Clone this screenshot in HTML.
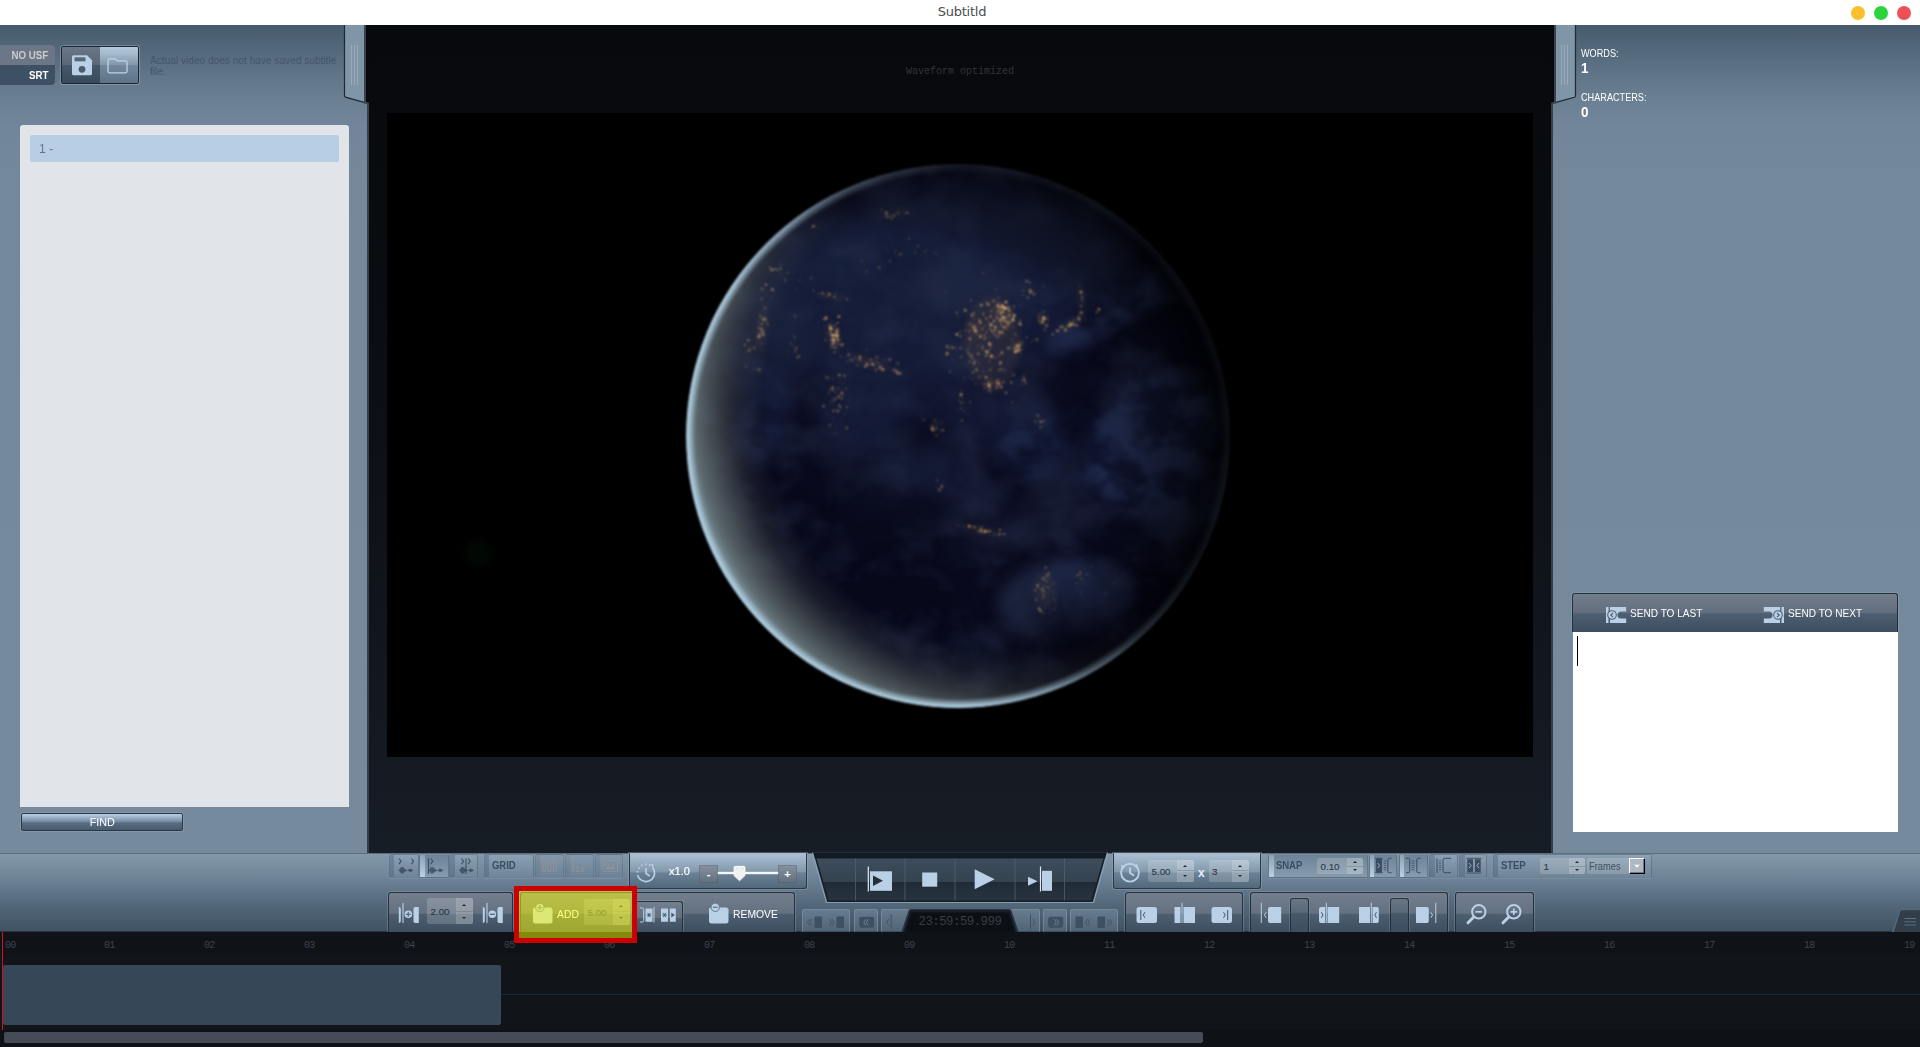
<!DOCTYPE html>
<html lang="en">
<head>
<meta charset="utf-8">
<title>Subtitld</title>
<style>
*{box-sizing:border-box;margin:0;padding:0}
html,body{width:1920px;height:1047px;overflow:hidden;background:#fff}
body{position:relative;font-family:"Liberation Sans","DejaVu Sans",sans-serif;font-size:11px;color:#fff}
.a{position:absolute}
svg{position:absolute;overflow:visible}
/* title bar */
#titlebar{left:0;top:0;width:1920px;height:25px;background:#fff}
#title{left:860px;top:3px;width:204px;text-align:center;letter-spacing:-.25px;font-family:"DejaVu Sans","Liberation Sans",sans-serif;font-size:13px;line-height:18px;color:#4d4d4d}
.wb{width:14px;height:14px;border-radius:50%;top:6px}
/* panels */
#left{left:0;top:25px;width:369px;height:828px;background:linear-gradient(#465a6c 0,#52677a 22px,#5f7487 48px,#6b8093 75px,#71869a 100px,#73889b 140px,#758a9d 100%)}
#right{left:1551px;top:25px;width:369px;height:828px;background:linear-gradient(#465a6c 0,#52677a 22px,#5f7487 48px,#6b8093 75px,#71869a 100px,#73889b 140px,#758a9d 100%)}
#center{left:369px;top:25px;width:1182px;height:828px;background:linear-gradient(#07090c 0,#0a0d11 300px,#11161c 600px,#171d25 100%)}
#video{left:387px;top:113px;width:1146px;height:644px;background:#000}
/* bottom */
#toolbar{left:0;top:853px;width:1920px;height:79px;border-top:1px solid #5c6f80;border-bottom:1px solid #2a3540;background:linear-gradient(#8398a9 0,#6f8496 30%,#566a7d 62%,#3f5365 100%)}
#timeline{left:0;top:932px;width:1920px;height:115px;background:#111418}
.tl{top:939.5px;font-family:"Liberation Mono","DejaVu Sans Mono",monospace;font-size:10px;letter-spacing:-.8px;line-height:12px;color:#3a4350}

/* left panel content */
.tab{left:0;width:55px;height:20px;text-align:right;padding-right:7px;font-weight:bold;font-size:11.2px;line-height:20px}
.tab span{display:inline-block;transform:scaleX(.87);transform-origin:right center}
.u{display:inline-block;transform:scaleX(.87);transform-origin:left center;white-space:nowrap}
.uc{display:inline-block;transform:scaleX(.87);transform-origin:center center;white-space:nowrap}
#tab1{top:45px;background:#6c7687;color:#cdcdcd;border-top-right-radius:4px}
#tab2{top:65px;background:#3d5064;color:#fff;border-bottom-right-radius:4px}
#fbtn{left:61px;top:46px;width:78px;height:38px;border:1px solid #1c2631;border-radius:2px;box-shadow:0 0 0 1px rgba(160,180,200,.45);overflow:hidden}
#fbtn .h1{left:0;top:0;width:38px;height:36px;background:linear-gradient(#6b7787 0,#5a6777 49%,#45586a 51%,#384a5c 100%)}
#fbtn .h2{left:38px;top:0;width:38px;height:36px;background:linear-gradient(#b4c9dd 0,#a5bacd 18%,#8398ab 49%,#71879b 51%,#5d7388 100%)}
#msg{left:150px;top:55px;width:200px;font-size:10.15px;line-height:11px;color:#42566a}
#list{left:20px;top:125px;width:329px;height:682px;background:#e1e5ea;border-radius:3px 3px 0 0}
#row{left:30px;top:135px;width:309px;height:27px;background:#b8cee4;border-radius:2px;color:#657484;font-size:13.5px;line-height:27px;padding-left:9px}
#find{left:21px;top:813px;width:162px;height:18px;border:1px solid #2a3744;border-radius:2px;background:linear-gradient(#b9cddf 0,#9eb3c7 20%,#7188a0 50%,#586e84 55%,#475b6e 100%);text-align:center;font-size:11.4px;line-height:16px;color:#fff;box-shadow:0 0 0 1px rgba(150,170,190,.4)}
.stat{left:1581px;font-size:10.5px;line-height:11px;color:#fff}
.statv{left:1581px;font-size:14.5px;font-weight:bold;line-height:16px;color:#fff;transform:scaleX(.93);transform-origin:left}

#sendbar{left:1572px;top:593px;width:326px;height:39px;border:1px solid #26303b;border-bottom:none;border-radius:3px 3px 0 0;background:linear-gradient(#737e8d 0,#626e7d 49%,#4d5f71 52%,#3c4e60 100%);box-shadow:0 0 0 1px rgba(150,170,190,.35)}
#textbox{left:1573px;top:632px;width:325px;height:200px;background:#fff}
.sendt{top:606px;font-size:11.4px;line-height:14px;color:#fff}
/*TBCSS*//* toolbar */
.tb{top:853.5px;height:24px;background:linear-gradient(#8ba0b2,#6f8598);border:1px solid rgba(70,90,110,.45);border-top-color:rgba(70,90,110,.15);border-radius:2px;box-shadow:0 1px 0 rgba(160,180,200,.25)}
.tb i{position:absolute;left:0;top:0;width:4.500px;height:22px;background:linear-gradient(#71869a,#5f7589)}
.tb.on{background:linear-gradient(#6d8396,#869bae)}
.tb.on i{background:linear-gradient(#8da2b5,#bbcfe2)}
.tb.dis{background:linear-gradient(#8398aa,#6c8295);border-color:rgba(70,90,110,.3)}
.tb.dis svg{opacity:.7}
.tb.dis i{background:linear-gradient(#7b90a3,#677d90)}
.lbl{position:absolute;top:3.500px;font-size:11px;letter-spacing:-.1px;font-weight:bold;line-height:14px;color:#3b4d60}
.pnl{border:1px solid #27313c;border-bottom:none;border-radius:3px 3px 0 0;background:linear-gradient(#747f8e 0,#63707f 52%,#4c5e70 55%,#3c4e60 100%);box-shadow:0 0 0 1px rgba(150,170,190,.35)}
.pnl.in{background:linear-gradient(#6a7685 0,#5b6877 40%,#46586a 44%,#3b4d5f 100%);box-shadow:0 0 0 1px rgba(150,170,190,.25)}
.pnl2{border:1px solid #2b3845;border-top-color:#a5b9cb;border-radius:0 0 3px 3px;background:linear-gradient(#aabfd2 0,#8298ab 52%,#6b8195 56%,#52687b 100%);box-shadow:0 0 0 1px rgba(150,170,190,.4)}
.spin{border-radius:2px;background:rgba(255,255,255,.17);overflow:hidden}
.spin b{position:absolute;right:0;top:0;height:100%;background:rgba(255,255,255,.16);box-shadow:inset 0 0 0 .5px rgba(255,255,255,.08)}
.spin b:after{content:"";position:absolute;left:0;right:0;top:50%;height:1px;margin-top:-.5px;background:rgba(90,100,115,.35)}
.spin u{position:absolute;left:4px;top:0;text-decoration:none;font-size:11.500px;color:#26384a;line-height:100%;-webkit-text-stroke:.15px #26384a}
.spin s{position:absolute;width:0;height:0;margin-left:.5px;border:2px solid transparent;border-top:none;border-bottom:2.500px solid #1e2a36}
.spin s.dn{border-bottom:none;border-top:2.500px solid #1e2a36}
.spin.md u{top:6.500px;font-size:9.800px;line-height:14px;left:3.500px}
.spin.lt u{top:4.500px;font-size:9.800px;line-height:14px;left:3.500px;color:#2d4053}
.spin.sm u{top:1.500px;font-size:9.800px;line-height:14px}
.spin.dim u{color:#3a4c5f}
.db{top:909px;height:23px;background:linear-gradient(rgba(150,172,192,.32),rgba(150,172,192,.2));border:1px solid rgba(150,170,190,.4);border-bottom:none;border-radius:2px 2px 0 0}
#redbox{left:514px;top:886px;width:123px;height:57px;border:5px solid #cc0000;background:rgba(255,255,0,.5)}
/* timeline */
#tlhead{left:0;top:932px;width:1920px;height:22px;background:#0f1318}
#tlblock{left:3px;top:965px;width:498px;height:60px;background:#364757;border-radius:2px}
#tlline{left:501px;top:994px;width:1419px;height:1px;background:#16293a}
#tlscroll{left:4px;top:1032px;width:1199px;height:11px;background:#454c57;border-radius:2px}
#tlscrollbg{left:0;top:1030px;width:1920px;height:17px;background:#0e1115}
#play{left:2px;top:932px;width:1px;height:98px;background:#d8101a}
/*/TBCSS*/
</style>
</head>
<body>
<div id="titlebar" class="a"></div>
<div id="title" class="a">Subtitld</div>
<div class="a wb" style="left:1851px;background:#fbc02d"></div>
<div class="a wb" style="left:1874px;background:#2cd43c"></div>
<div class="a wb" style="left:1897px;background:#ef4f57"></div>

<div id="center" class="a"></div>
<div id="left" class="a"></div>
<div id="right" class="a"></div>
<div id="wf" class="a" style="left:860px;top:65.5px;width:200px;text-align:center;font-family:'Liberation Mono','DejaVu Sans Mono',monospace;font-size:10px;line-height:12px;color:#30353b">Waveform optimized</div>
<div id="video" class="a"></div>
<!--EARTH--><svg id="earth" width="1146" height="644" viewBox="387 113 1146 644" style="left:387px;top:113px">
<defs>
<clipPath id="ec"><circle cx="958" cy="436" r="272"/></clipPath>
<filter id="b1" color-interpolation-filters="sRGB" filterUnits="userSpaceOnUse" x="387" y="113" width="1146" height="644"><feGaussianBlur stdDeviation="1.1"/></filter>
<filter id="b2" color-interpolation-filters="sRGB" filterUnits="userSpaceOnUse" x="387" y="113" width="1146" height="644"><feGaussianBlur stdDeviation="14"/></filter>
<filter id="b3" color-interpolation-filters="sRGB" filterUnits="userSpaceOnUse" x="387" y="113" width="1146" height="644"><feGaussianBlur stdDeviation="7"/></filter>
<filter id="b4" color-interpolation-filters="sRGB" filterUnits="userSpaceOnUse" x="387" y="113" width="1146" height="644"><feGaussianBlur stdDeviation="0.7"/></filter>
<filter id="b5" color-interpolation-filters="sRGB" filterUnits="userSpaceOnUse" x="387" y="113" width="1146" height="644"><feGaussianBlur stdDeviation="3"/></filter>
<filter id="cl" color-interpolation-filters="sRGB" filterUnits="userSpaceOnUse" x="680" y="160" width="560" height="556"><feTurbulence type="fractalNoise" baseFrequency="0.012 0.016" numOctaves="5" seed="11" result="n"/><feColorMatrix in="n" type="matrix" values="0 0 0 0 0.14  0 0 0 0 0.18  0 0 0 0 0.29  3 0 0 0 -1.35"/><feGaussianBlur stdDeviation="1.2"/></filter>
<filter id="cl2" color-interpolation-filters="sRGB" filterUnits="userSpaceOnUse" x="680" y="160" width="560" height="556"><feTurbulence type="fractalNoise" baseFrequency="0.02 0.026" numOctaves="4" seed="5" result="n"/><feColorMatrix in="n" type="matrix" values="0 0 0 0 0.15  0 0 0 0 0.18  0 0 0 0 0.29  0 3 0 0 -1.4"/><feGaussianBlur stdDeviation="1"/></filter>
<filter id="cl3" color-interpolation-filters="sRGB" filterUnits="userSpaceOnUse" x="680" y="160" width="560" height="556"><feTurbulence type="fractalNoise" baseFrequency="0.028 0.034" numOctaves="4" seed="8" result="n"/><feColorMatrix in="n" type="matrix" values="0 0 0 0 0.12  0 0 0 0 0.16  0 0 0 0 0.29  0 0 4 0 -1.55"/><feGaussianBlur stdDeviation="1.3"/></filter>
<radialGradient id="eg" gradientUnits="userSpaceOnUse" cx="1014" cy="404" r="337">
<stop offset="0" stop-color="#62696b" stop-opacity="0"/>
<stop offset=".74" stop-color="#62696b" stop-opacity="0"/>
<stop offset=".82" stop-color="#5f6766" stop-opacity=".22"/>
<stop offset=".89" stop-color="#697472" stop-opacity=".55"/>
<stop offset=".95" stop-color="#758686" stop-opacity=".78"/>
<stop offset=".985" stop-color="#8ba2ae" stop-opacity=".92"/>
<stop offset="1" stop-color="#a9c8d9" stop-opacity="1"/>
</radialGradient>
<radialGradient id="er" gradientUnits="userSpaceOnUse" cx="958" cy="436" r="272">
<stop offset="0" stop-color="#9dbccc" stop-opacity="0"/>
<stop offset=".965" stop-color="#9dbccc" stop-opacity="0"/>
<stop offset=".99" stop-color="#aecde0" stop-opacity=".9"/>
<stop offset="1" stop-color="#aecde0" stop-opacity="1"/>
</radialGradient>
<linearGradient id="em" gradientUnits="userSpaceOnUse" x1="690" y1="590" x2="1226" y2="282">
<stop offset="0" stop-color="#fff"/><stop offset=".30" stop-color="#fff" stop-opacity="1"/><stop offset=".42" stop-color="#fff" stop-opacity=".75"/><stop offset=".5" stop-color="#fff" stop-opacity=".45"/><stop offset=".6" stop-color="#fff" stop-opacity=".18"/><stop offset=".72" stop-color="#fff" stop-opacity=".04"/><stop offset="1" stop-color="#fff" stop-opacity="0"/>
</linearGradient>
<radialGradient id="eld" gradientUnits="userSpaceOnUse" cx="900" cy="450" r="335">
<stop offset="0" stop-color="#000" stop-opacity="0"/><stop offset=".62" stop-color="#000" stop-opacity="0"/><stop offset=".85" stop-color="#000" stop-opacity=".45"/><stop offset="1" stop-color="#000" stop-opacity=".85"/>
</radialGradient>
<mask id="emk" maskUnits="userSpaceOnUse" x="387" y="113" width="1146" height="644"><rect x="387" y="113" width="1146" height="644" fill="url(#em)"/></mask>
<radialGradient id="ebase" gradientUnits="userSpaceOnUse" cx="960" cy="400" r="300">
<stop offset="0" stop-color="#0b0d22"/><stop offset=".7" stop-color="#090a1d"/><stop offset="1" stop-color="#060718"/>
</radialGradient>
</defs>
<circle cx="478" cy="553" r="13" fill="#010803" filter="url(#b5)"/><!--flare-->
<g filter="url(#b1)"><g clip-path="url(#ec)">
<circle cx="958" cy="436" r="272" fill="url(#ebase)"/>
<g filter="url(#b2)">
<ellipse cx="930" cy="285" rx="190" ry="85" fill="#171e3a" opacity="0.9" transform="rotate(-8 930 285)"/>
<ellipse cx="865" cy="395" rx="48" ry="62" fill="#161d39" opacity="0.9" transform="rotate(10 865 395)"/>
<ellipse cx="990" cy="375" rx="75" ry="70" fill="#151c37" opacity="0.8" transform="rotate(0 990 375)"/>
<ellipse cx="775" cy="345" rx="38" ry="70" fill="#19203b" opacity="0.8" transform="rotate(10 775 345)"/>
<ellipse cx="1000" cy="215" rx="120" ry="35" fill="#151b34" opacity="0.8" transform="rotate(8 1000 215)"/>
</g>
<g filter="url(#b3)">
<ellipse cx="1065" cy="600" rx="68" ry="38" fill="#1d253f" opacity="0.95" transform="rotate(-5 1065 600)"/>
<ellipse cx="900" cy="480" rx="60" ry="25" fill="#181f3a" opacity="0.7" transform="rotate(-25 900 480)"/>
<ellipse cx="960" cy="490" rx="50" ry="22" fill="#171e39" opacity="0.6" transform="rotate(15 960 490)"/>
<ellipse cx="870" cy="640" rx="35" ry="25" fill="#151b34" opacity="0.6" transform="rotate(30 870 640)"/>
<ellipse cx="1000" cy="300" rx="25" ry="30" fill="#19213d" opacity="0.5" transform="rotate(0 1000 300)"/>
<ellipse cx="830" cy="250" rx="60" ry="35" fill="#19213d" opacity="0.6" transform="rotate(-20 830 250)"/>
</g>
<rect x="680" y="160" width="560" height="556" filter="url(#cl)" opacity=".5"/>
<g filter="url(#b2)">
<ellipse cx="820" cy="600" rx="150" ry="110" fill="#07081a" opacity="0.85" transform="rotate(-30 820 600)"/>
<ellipse cx="1100" cy="640" rx="90" ry="40" fill="#08091a" opacity="0.7" transform="rotate(0 1100 640)"/>
<ellipse cx="1110" cy="365" rx="90" ry="45" fill="#08091b" opacity="0.75" transform="rotate(-20 1110 365)"/>
<ellipse cx="1190" cy="290" rx="60" ry="80" fill="#06071a" opacity="0.7" transform="rotate(-30 1190 290)"/>
</g>
<mask id="cm" maskUnits="userSpaceOnUse" x="680" y="160" width="560" height="556"><g filter="url(#b3)">
<ellipse cx="1165" cy="420" rx="56" ry="51" fill="#fff" opacity="1" transform="rotate(0 1165 420)"/>
<ellipse cx="1120" cy="455" rx="41" ry="51" fill="#fff" opacity="0.9" transform="rotate(20 1120 455)"/>
<ellipse cx="1150" cy="475" rx="56" ry="46" fill="#fff" opacity="0.7999999999999999" transform="rotate(0 1150 475)"/>
<ellipse cx="1125" cy="303" rx="86" ry="18" fill="#fff" opacity="1" transform="rotate(-28 1125 303)"/>
<ellipse cx="1075" cy="335" rx="36" ry="16" fill="#fff" opacity="0.7999999999999999" transform="rotate(-28 1075 335)"/>
<ellipse cx="1030" cy="440" rx="34" ry="36" fill="#fff" opacity="0.7999999999999999" transform="rotate(0 1030 440)"/>
<ellipse cx="1085" cy="590" rx="46" ry="36" fill="#fff" opacity="0.6" transform="rotate(0 1085 590)"/>
<ellipse cx="760" cy="420" rx="28" ry="46" fill="#fff" opacity="0.65" transform="rotate(15 760 420)"/>
</g></mask>
<g mask="url(#cm)"><rect x="680" y="160" width="560" height="556" fill="#141b38" opacity=".55"/><rect x="680" y="160" width="560" height="556" filter="url(#cl3)" opacity=".95"/></g>
<rect x="680" y="160" width="560" height="556" filter="url(#cl2)" opacity=".4"/>
<g filter="url(#b5)" opacity=".55">
<ellipse cx="762" cy="328" rx="4" ry="25" fill="#8a6a4a" opacity="0.28" transform="rotate(8 762 328)"/>
<ellipse cx="893" cy="214" rx="14" ry="4" fill="#8a6a4a" opacity="0.24" transform="rotate(-15 893 214)"/>
<ellipse cx="830" cy="296" rx="14" ry="3" fill="#8a6a4a" opacity="0.24" transform="rotate(5 830 296)"/>
<ellipse cx="833" cy="336" rx="6" ry="15" fill="#8a6a4a" opacity="0.35" transform="rotate(-15 833 336)"/>
<ellipse cx="868" cy="362" rx="21" ry="5" fill="#8a6a4a" opacity="0.28" transform="rotate(15 868 362)"/>
<ellipse cx="992" cy="342" rx="28" ry="46" fill="#8a6a4a" opacity="0.26" transform="rotate(0 992 342)"/>
<ellipse cx="1003" cy="318" rx="10" ry="12" fill="#8a6a4a" opacity="0.35" transform="rotate(0 1003 318)"/>
<ellipse cx="1000" cy="307" rx="5" ry="4" fill="#8a6a4a" opacity="0.35" transform="rotate(0 1000 307)"/>
<ellipse cx="1017" cy="346" rx="5" ry="7" fill="#8a6a4a" opacity="0.35" transform="rotate(0 1017 346)"/>
<ellipse cx="993" cy="386" rx="9" ry="5" fill="#8a6a4a" opacity="0.35" transform="rotate(0 993 386)"/>
<ellipse cx="975" cy="330" rx="9" ry="9" fill="#8a6a4a" opacity="0.32" transform="rotate(0 975 330)"/>
<ellipse cx="1044" cy="320" rx="5" ry="6" fill="#8a6a4a" opacity="0.35" transform="rotate(0 1044 320)"/>
<ellipse cx="1071" cy="324" rx="16" ry="3" fill="#8a6a4a" opacity="0.35" transform="rotate(-30 1071 324)"/>
<ellipse cx="1082" cy="300" rx="3" ry="12" fill="#8a6a4a" opacity="0.28" transform="rotate(0 1082 300)"/>
<ellipse cx="980" cy="530" rx="19" ry="3" fill="#8a6a4a" opacity="0.35" transform="rotate(10 980 530)"/>
<ellipse cx="937" cy="427" rx="6" ry="7" fill="#8a6a4a" opacity="0.24" transform="rotate(0 937 427)"/>
<ellipse cx="1045" cy="590" rx="10" ry="18" fill="#8a6a4a" opacity="0.24" transform="rotate(0 1045 590)"/>
</g>
<g filter="url(#b4)"><circle cx="760.2" cy="335.7" r="0.5" fill="#e8b470" opacity="0.31"/><circle cx="760.8" cy="331.9" r="0.8" fill="#c9985a" opacity="0.30"/><circle cx="759.5" cy="333.3" r="1.2" fill="#e8b470" opacity="0.31"/><circle cx="766.6" cy="321.5" r="0.5" fill="#c9985a" opacity="0.56"/><circle cx="763.4" cy="331.6" r="0.7" fill="#dba868" opacity="0.42"/><circle cx="759.3" cy="322.5" r="0.7" fill="#dba868" opacity="0.33"/><circle cx="757.7" cy="341.5" r="0.6" fill="#dba868" opacity="0.55"/><circle cx="758.6" cy="328" r="1" fill="#c9985a" opacity="0.50"/><circle cx="759.4" cy="336.6" r="0.7" fill="#dba868" opacity="0.62"/><circle cx="763.1" cy="334.6" r="1.5" fill="#c9985a" opacity="0.70"/><circle cx="754.4" cy="369.2" r="0.6" fill="#dba868" opacity="0.53"/><circle cx="763.3" cy="319.3" r="1.5" fill="#e8b470" opacity="0.48"/><circle cx="765.1" cy="308.2" r="1" fill="#f3c987" opacity="0.44"/><circle cx="760.6" cy="316.4" r="1.5" fill="#e8b470" opacity="0.31"/><circle cx="765.7" cy="322.5" r="0.6" fill="#f3c987" opacity="0.31"/><circle cx="762.2" cy="288.9" r="1.5" fill="#c9985a" opacity="0.42"/><circle cx="765.2" cy="319.1" r="1.5" fill="#e8b470" opacity="0.45"/><circle cx="760" cy="328.2" r="0.9" fill="#dba868" opacity="0.34"/><circle cx="754.3" cy="347.7" r="1.5" fill="#c9985a" opacity="0.32"/><circle cx="759.2" cy="334.9" r="0.7" fill="#f3c987" opacity="0.67"/><circle cx="765.9" cy="284.6" r="1.2" fill="#dba868" opacity="0.74"/><circle cx="762.7" cy="332.5" r="0.8" fill="#dba868" opacity="0.29"/><circle cx="761.8" cy="329.4" r="1.2" fill="#f3c987" opacity="0.54"/><circle cx="766.9" cy="321.8" r="0.5" fill="#c9985a" opacity="0.50"/><circle cx="758.5" cy="336.8" r="1.5" fill="#e8b470" opacity="0.58"/><circle cx="759.1" cy="369.5" r="1.5" fill="#f3c987" opacity="0.36"/><circle cx="761.6" cy="323.7" r="0.7" fill="#f3c987" opacity="0.54"/><circle cx="761.8" cy="324.1" r="0.8" fill="#dba868" opacity="0.57"/><circle cx="761.5" cy="298.9" r="1" fill="#e8b470" opacity="0.51"/><circle cx="772.5" cy="289.6" r="1.5" fill="#f3c987" opacity="0.51"/><circle cx="762.6" cy="331.8" r="1" fill="#c9985a" opacity="0.64"/><circle cx="763.9" cy="320.1" r="0.5" fill="#f3c987" opacity="0.38"/><circle cx="761.9" cy="343.5" r="0.5" fill="#f3c987" opacity="0.64"/><circle cx="768" cy="324.7" r="0.9" fill="#dba868" opacity="0.53"/><circle cx="759.6" cy="336.4" r="1" fill="#dba868" opacity="0.59"/><circle cx="753.7" cy="331.5" r="0.8" fill="#c9985a" opacity="0.23"/><circle cx="748.3" cy="352" r="0.5" fill="#c9985a" opacity="0.41"/><circle cx="745.9" cy="366.6" r="1" fill="#f3c987" opacity="0.31"/><circle cx="751.5" cy="347.5" r="0.8" fill="#c9985a" opacity="0.21"/><circle cx="748.3" cy="357" r="0.5" fill="#f3c987" opacity="0.32"/><circle cx="750" cy="345.7" r="0.6" fill="#dba868" opacity="0.45"/><circle cx="747.5" cy="350.7" r="1" fill="#c9985a" opacity="0.20"/><circle cx="744.8" cy="353.5" r="0.6" fill="#dba868" opacity="0.39"/><circle cx="749.5" cy="350" r="1.5" fill="#dba868" opacity="0.42"/><circle cx="748.4" cy="340.2" r="1.5" fill="#f3c987" opacity="0.37"/><circle cx="748.5" cy="361.6" r="0.5" fill="#e8b470" opacity="0.18"/><circle cx="744.8" cy="344.9" r="1.2" fill="#dba868" opacity="0.47"/><circle cx="777.3" cy="269.4" r="0.9" fill="#dba868" opacity="0.29"/><circle cx="775.5" cy="269.1" r="1.2" fill="#e8b470" opacity="0.51"/><circle cx="780.3" cy="268.7" r="1.5" fill="#c9985a" opacity="0.45"/><circle cx="779.9" cy="264.2" r="0.7" fill="#e8b470" opacity="0.40"/><circle cx="782.1" cy="265.4" r="0.5" fill="#dba868" opacity="0.49"/><circle cx="780.4" cy="273.9" r="0.6" fill="#f3c987" opacity="0.41"/><circle cx="771.6" cy="269.7" r="1.5" fill="#e8b470" opacity="0.49"/><circle cx="777.3" cy="270.7" r="0.8" fill="#e8b470" opacity="0.31"/><circle cx="768" cy="274.7" r="0.6" fill="#dba868" opacity="0.37"/><circle cx="772.4" cy="269.7" r="1.5" fill="#dba868" opacity="0.39"/><circle cx="769.8" cy="267.4" r="0.9" fill="#dba868" opacity="0.54"/><circle cx="793.3" cy="345.5" r="0.6" fill="#f3c987" opacity="0.35"/><circle cx="794.9" cy="349.8" r="0.6" fill="#f3c987" opacity="0.29"/><circle cx="794" cy="336.5" r="0.7" fill="#f3c987" opacity="0.55"/><circle cx="797.7" cy="356.9" r="1.5" fill="#e8b470" opacity="0.29"/><circle cx="787.9" cy="351.8" r="0.8" fill="#c9985a" opacity="0.27"/><circle cx="796.5" cy="347.8" r="1.2" fill="#f3c987" opacity="0.28"/><circle cx="795.5" cy="350.9" r="1" fill="#c9985a" opacity="0.41"/><circle cx="790.7" cy="342.8" r="0.9" fill="#e8b470" opacity="0.39"/><circle cx="799.5" cy="356" r="0.8" fill="#e8b470" opacity="0.56"/><circle cx="795" cy="350.2" r="0.7" fill="#dba868" opacity="0.31"/><circle cx="795.6" cy="338.3" r="0.9" fill="#c9985a" opacity="0.36"/><circle cx="791.4" cy="345.7" r="0.5" fill="#dba868" opacity="0.50"/><circle cx="814.2" cy="226.3" r="0.5" fill="#f3c987" opacity="0.51"/><circle cx="818.7" cy="227.6" r="0.6" fill="#e8b470" opacity="0.36"/><circle cx="813.1" cy="226.4" r="1.2" fill="#f3c987" opacity="0.63"/><circle cx="814.5" cy="225.7" r="0.8" fill="#dba868" opacity="0.64"/><circle cx="893" cy="215.8" r="0.9" fill="#dba868" opacity="0.51"/><circle cx="891.3" cy="217.7" r="0.7" fill="#e8b470" opacity="0.36"/><circle cx="895.3" cy="213.4" r="0.5" fill="#dba868" opacity="0.55"/><circle cx="886.6" cy="215.5" r="1.5" fill="#c9985a" opacity="0.29"/><circle cx="886.3" cy="212.8" r="1.2" fill="#f3c987" opacity="0.65"/><circle cx="881.9" cy="209.5" r="1" fill="#dba868" opacity="0.33"/><circle cx="886.9" cy="217.1" r="0.5" fill="#e8b470" opacity="0.60"/><circle cx="906.1" cy="212.5" r="0.9" fill="#e8b470" opacity="0.43"/><circle cx="907.8" cy="212.8" r="0.9" fill="#f3c987" opacity="0.50"/><circle cx="898.4" cy="213.1" r="0.9" fill="#f3c987" opacity="0.43"/><circle cx="888.5" cy="217.1" r="1" fill="#f3c987" opacity="0.35"/><circle cx="894.5" cy="215.4" r="1" fill="#c9985a" opacity="0.41"/><circle cx="891.8" cy="218.4" r="0.8" fill="#e8b470" opacity="0.46"/><circle cx="906.9" cy="213.1" r="0.7" fill="#e8b470" opacity="0.41"/><circle cx="824.1" cy="296.3" r="0.8" fill="#dba868" opacity="0.28"/><circle cx="822.6" cy="293.2" r="1.2" fill="#c9985a" opacity="0.57"/><circle cx="838.1" cy="298.9" r="0.7" fill="#c9985a" opacity="0.26"/><circle cx="828.6" cy="292.9" r="0.7" fill="#e8b470" opacity="0.63"/><circle cx="835.5" cy="294.5" r="0.8" fill="#e8b470" opacity="0.28"/><circle cx="835.5" cy="297.6" r="0.6" fill="#c9985a" opacity="0.40"/><circle cx="818.6" cy="294.2" r="0.8" fill="#e8b470" opacity="0.45"/><circle cx="826.8" cy="295.9" r="0.6" fill="#e8b470" opacity="0.52"/><circle cx="829.9" cy="294.1" r="0.6" fill="#dba868" opacity="0.60"/><circle cx="829.3" cy="294.8" r="1.5" fill="#c9985a" opacity="0.45"/><circle cx="846.9" cy="299.2" r="0.9" fill="#dba868" opacity="0.57"/><circle cx="834.3" cy="296.8" r="0.9" fill="#f3c987" opacity="0.52"/><circle cx="830.7" cy="333.1" r="1.5" fill="#f3c987" opacity="0.39"/><circle cx="834.5" cy="334.8" r="0.8" fill="#f3c987" opacity="0.76"/><circle cx="830.3" cy="329" r="1.5" fill="#e8b470" opacity="0.63"/><circle cx="837.6" cy="334.3" r="0.9" fill="#c9985a" opacity="0.94"/><circle cx="837.4" cy="336" r="1.5" fill="#c9985a" opacity="0.95"/><circle cx="840.9" cy="356.5" r="0.8" fill="#e8b470" opacity="0.39"/><circle cx="838.1" cy="343.8" r="1" fill="#f3c987" opacity="0.43"/><circle cx="834.9" cy="325.6" r="0.8" fill="#c9985a" opacity="0.65"/><circle cx="832.2" cy="339.7" r="1.5" fill="#c9985a" opacity="0.76"/><circle cx="833.6" cy="340.9" r="1" fill="#e8b470" opacity="0.58"/><circle cx="833" cy="335.5" r="1" fill="#e8b470" opacity="0.85"/><circle cx="834.7" cy="333.2" r="0.5" fill="#f3c987" opacity="0.89"/><circle cx="833.9" cy="339.3" r="1.2" fill="#e8b470" opacity="0.95"/><circle cx="832.4" cy="344" r="0.9" fill="#f3c987" opacity="0.86"/><circle cx="841.4" cy="344.7" r="0.9" fill="#dba868" opacity="0.73"/><circle cx="834.9" cy="343.1" r="1" fill="#f3c987" opacity="0.46"/><circle cx="831.4" cy="326.5" r="0.5" fill="#c9985a" opacity="0.84"/><circle cx="837.6" cy="322.9" r="0.8" fill="#e8b470" opacity="0.78"/><circle cx="835.5" cy="331.3" r="0.7" fill="#f3c987" opacity="0.74"/><circle cx="825.3" cy="340" r="0.7" fill="#c9985a" opacity="0.45"/><circle cx="833" cy="342.8" r="0.9" fill="#dba868" opacity="0.59"/><circle cx="834.4" cy="347.3" r="1.2" fill="#dba868" opacity="0.42"/><circle cx="838.2" cy="339.8" r="1.5" fill="#c9985a" opacity="0.68"/><circle cx="838.9" cy="316.4" r="1.5" fill="#dba868" opacity="0.61"/><circle cx="834.6" cy="341.6" r="0.6" fill="#f3c987" opacity="0.54"/><circle cx="835.9" cy="347.8" r="0.5" fill="#c9985a" opacity="0.80"/><circle cx="831.1" cy="347.3" r="0.8" fill="#f3c987" opacity="0.58"/><circle cx="830.2" cy="325.4" r="1" fill="#dba868" opacity="0.43"/><circle cx="842.5" cy="344.8" r="1.2" fill="#c9985a" opacity="0.59"/><circle cx="830.9" cy="340" r="0.5" fill="#c9985a" opacity="0.43"/><circle cx="826" cy="317.9" r="1.5" fill="#c9985a" opacity="0.93"/><circle cx="836.7" cy="335" r="1.5" fill="#dba868" opacity="0.93"/><circle cx="831.9" cy="329.6" r="0.7" fill="#e8b470" opacity="0.66"/><circle cx="837.2" cy="329.3" r="1.5" fill="#e8b470" opacity="0.40"/><circle cx="834.9" cy="335.5" r="0.5" fill="#f3c987" opacity="0.74"/><circle cx="837.3" cy="331.7" r="1.2" fill="#e8b470" opacity="0.77"/><circle cx="836.7" cy="339.8" r="0.8" fill="#dba868" opacity="0.58"/><circle cx="832.9" cy="335.6" r="0.9" fill="#f3c987" opacity="0.95"/><circle cx="837.3" cy="331.3" r="0.8" fill="#dba868" opacity="0.64"/><circle cx="832" cy="335.6" r="1.2" fill="#f3c987" opacity="0.77"/><circle cx="835.8" cy="337.4" r="1.2" fill="#dba868" opacity="0.40"/><circle cx="824" cy="319.3" r="0.8" fill="#f3c987" opacity="0.65"/><circle cx="830.1" cy="327.8" r="1.2" fill="#f3c987" opacity="0.47"/><circle cx="829.8" cy="325.4" r="0.8" fill="#dba868" opacity="0.65"/><circle cx="834.5" cy="352.2" r="0.8" fill="#f3c987" opacity="0.63"/><circle cx="831.2" cy="328.4" r="1.5" fill="#dba868" opacity="0.72"/><circle cx="825.4" cy="340" r="0.5" fill="#dba868" opacity="0.92"/><circle cx="833.7" cy="334.3" r="0.5" fill="#dba868" opacity="0.93"/><circle cx="850" cy="359.9" r="0.7" fill="#f3c987" opacity="0.47"/><circle cx="866.2" cy="349.7" r="0.7" fill="#dba868" opacity="0.44"/><circle cx="859.9" cy="356.4" r="1.5" fill="#c9985a" opacity="0.30"/><circle cx="889.7" cy="359.4" r="1.5" fill="#e8b470" opacity="0.36"/><circle cx="872.4" cy="363.9" r="1.2" fill="#e8b470" opacity="0.74"/><circle cx="848.6" cy="354.6" r="1.2" fill="#f3c987" opacity="0.45"/><circle cx="874.8" cy="360.5" r="0.5" fill="#dba868" opacity="0.62"/><circle cx="846.7" cy="361.8" r="0.8" fill="#c9985a" opacity="0.44"/><circle cx="880.7" cy="366.1" r="1.2" fill="#e8b470" opacity="0.30"/><circle cx="845.2" cy="357.3" r="0.5" fill="#e8b470" opacity="0.40"/><circle cx="877.8" cy="362.8" r="0.9" fill="#e8b470" opacity="0.44"/><circle cx="865.1" cy="366.6" r="1" fill="#f3c987" opacity="0.72"/><circle cx="889.4" cy="367.9" r="0.6" fill="#dba868" opacity="0.29"/><circle cx="883" cy="369.4" r="1.5" fill="#c9985a" opacity="0.74"/><circle cx="876.8" cy="357" r="1.5" fill="#c9985a" opacity="0.34"/><circle cx="876" cy="369.8" r="0.9" fill="#dba868" opacity="0.67"/><circle cx="859.6" cy="357.8" r="1" fill="#e8b470" opacity="0.50"/><circle cx="855.4" cy="358.4" r="0.7" fill="#e8b470" opacity="0.40"/><circle cx="860.2" cy="356.7" r="1" fill="#c9985a" opacity="0.36"/><circle cx="897.9" cy="363.2" r="0.9" fill="#dba868" opacity="0.58"/><circle cx="879.7" cy="367.4" r="1.5" fill="#dba868" opacity="0.36"/><circle cx="852" cy="360.1" r="0.8" fill="#e8b470" opacity="0.64"/><circle cx="870.7" cy="359.9" r="0.9" fill="#f3c987" opacity="0.55"/><circle cx="867.1" cy="364.4" r="1.5" fill="#dba868" opacity="0.40"/><circle cx="868.3" cy="364.8" r="0.8" fill="#c9985a" opacity="0.44"/><circle cx="867.3" cy="364.4" r="0.8" fill="#e8b470" opacity="0.59"/><circle cx="847.8" cy="348" r="0.6" fill="#dba868" opacity="0.28"/><circle cx="884.8" cy="360.1" r="0.5" fill="#dba868" opacity="0.70"/><circle cx="873.7" cy="365" r="0.8" fill="#f3c987" opacity="0.73"/><circle cx="860.1" cy="359.7" r="0.9" fill="#e8b470" opacity="0.65"/><circle cx="880.8" cy="368.3" r="1" fill="#f3c987" opacity="0.38"/><circle cx="865.7" cy="362.3" r="0.9" fill="#dba868" opacity="0.30"/><circle cx="844.4" cy="375.5" r="1.2" fill="#dba868" opacity="0.45"/><circle cx="835.4" cy="392.6" r="0.5" fill="#c9985a" opacity="0.50"/><circle cx="841.8" cy="398.2" r="1.2" fill="#dba868" opacity="0.45"/><circle cx="835.5" cy="391.9" r="0.7" fill="#f3c987" opacity="0.35"/><circle cx="831.9" cy="401.3" r="0.9" fill="#e8b470" opacity="0.36"/><circle cx="833.7" cy="410.5" r="1" fill="#e8b470" opacity="0.36"/><circle cx="857.5" cy="365.3" r="1" fill="#c9985a" opacity="0.44"/><circle cx="837.2" cy="387.9" r="0.5" fill="#dba868" opacity="0.37"/><circle cx="823.5" cy="406.3" r="1.2" fill="#f3c987" opacity="0.42"/><circle cx="832.9" cy="397.8" r="0.5" fill="#dba868" opacity="0.23"/><circle cx="825.8" cy="375.5" r="0.6" fill="#f3c987" opacity="0.42"/><circle cx="837.6" cy="388.6" r="1" fill="#dba868" opacity="0.31"/><circle cx="841.8" cy="393.4" r="1.5" fill="#dba868" opacity="0.48"/><circle cx="832.7" cy="417.9" r="0.5" fill="#c9985a" opacity="0.56"/><circle cx="833.3" cy="411.2" r="1.2" fill="#dba868" opacity="0.24"/><circle cx="827" cy="377.6" r="1.2" fill="#dba868" opacity="0.43"/><circle cx="840.7" cy="389.2" r="0.8" fill="#dba868" opacity="0.23"/><circle cx="834.6" cy="400.1" r="0.8" fill="#dba868" opacity="0.56"/><circle cx="848.9" cy="400" r="0.5" fill="#f3c987" opacity="0.45"/><circle cx="846.8" cy="407" r="0.9" fill="#f3c987" opacity="0.44"/><circle cx="830" cy="389.7" r="1" fill="#c9985a" opacity="0.37"/><circle cx="838.3" cy="396.9" r="1.5" fill="#c9985a" opacity="0.38"/><circle cx="839.3" cy="375" r="1.5" fill="#c9985a" opacity="0.51"/><circle cx="835.3" cy="398.6" r="1" fill="#e8b470" opacity="0.37"/><circle cx="841.4" cy="382.4" r="0.5" fill="#dba868" opacity="0.22"/><circle cx="850.4" cy="405.7" r="0.6" fill="#c9985a" opacity="0.23"/><circle cx="829.2" cy="378.6" r="0.5" fill="#e8b470" opacity="0.52"/><circle cx="846.6" cy="428.1" r="1.5" fill="#dba868" opacity="0.31"/><circle cx="832.5" cy="378.2" r="0.8" fill="#f3c987" opacity="0.23"/><circle cx="832.8" cy="390.1" r="1" fill="#f3c987" opacity="0.53"/><circle cx="846" cy="388.5" r="0.9" fill="#c9985a" opacity="0.39"/><circle cx="839.8" cy="405.1" r="0.8" fill="#e8b470" opacity="0.32"/><circle cx="840.8" cy="407.7" r="0.9" fill="#c9985a" opacity="0.45"/><circle cx="845.5" cy="414.5" r="0.6" fill="#e8b470" opacity="0.49"/><circle cx="832.6" cy="387.4" r="1.5" fill="#e8b470" opacity="0.41"/><circle cx="837.9" cy="411" r="1.2" fill="#f3c987" opacity="0.48"/><circle cx="835.5" cy="432.8" r="0.7" fill="#e8b470" opacity="0.34"/><circle cx="832.9" cy="398.7" r="0.5" fill="#f3c987" opacity="0.32"/><circle cx="829.6" cy="425.2" r="1" fill="#e8b470" opacity="0.47"/><circle cx="839.3" cy="405.9" r="1.2" fill="#f3c987" opacity="0.36"/><circle cx="841.7" cy="392.1" r="0.8" fill="#e8b470" opacity="0.43"/><circle cx="838.6" cy="396.1" r="1" fill="#f3c987" opacity="0.32"/><circle cx="829.1" cy="393.3" r="0.9" fill="#dba868" opacity="0.42"/><circle cx="827" cy="412.9" r="0.7" fill="#dba868" opacity="0.26"/><circle cx="896.2" cy="369.1" r="0.6" fill="#f3c987" opacity="0.59"/><circle cx="895.2" cy="373.2" r="0.5" fill="#f3c987" opacity="0.31"/><circle cx="894" cy="370" r="1.5" fill="#e8b470" opacity="0.40"/><circle cx="900.3" cy="372.9" r="1.2" fill="#dba868" opacity="0.37"/><circle cx="901.5" cy="373.7" r="0.5" fill="#dba868" opacity="0.57"/><circle cx="898.1" cy="373.4" r="1.2" fill="#dba868" opacity="0.67"/><circle cx="896" cy="371.9" r="0.5" fill="#c9985a" opacity="0.76"/><circle cx="896.9" cy="371.7" r="1.2" fill="#c9985a" opacity="0.64"/><circle cx="900.5" cy="373.9" r="0.7" fill="#e8b470" opacity="0.39"/><circle cx="961.2" cy="390.5" r="0.6" fill="#f3c987" opacity="0.28"/><circle cx="960.6" cy="336.1" r="1.2" fill="#f3c987" opacity="0.38"/><circle cx="957" cy="409.5" r="0.8" fill="#e8b470" opacity="0.20"/><circle cx="970.1" cy="402" r="0.8" fill="#f3c987" opacity="0.46"/><circle cx="964.7" cy="377.9" r="0.8" fill="#c9985a" opacity="0.29"/><circle cx="952.7" cy="360.3" r="0.5" fill="#c9985a" opacity="0.43"/><circle cx="967.4" cy="350" r="0.9" fill="#c9985a" opacity="0.41"/><circle cx="959.8" cy="348.1" r="0.7" fill="#e8b470" opacity="0.22"/><circle cx="970.2" cy="377.3" r="0.7" fill="#dba868" opacity="0.28"/><circle cx="961.4" cy="349.1" r="0.7" fill="#e8b470" opacity="0.38"/><circle cx="957.9" cy="316.8" r="0.6" fill="#f3c987" opacity="0.43"/><circle cx="968" cy="413.4" r="0.6" fill="#c9985a" opacity="0.44"/><circle cx="966.1" cy="365.5" r="0.6" fill="#e8b470" opacity="0.19"/><circle cx="966.9" cy="323.8" r="0.9" fill="#dba868" opacity="0.32"/><circle cx="972.6" cy="379" r="0.8" fill="#f3c987" opacity="0.26"/><circle cx="960.6" cy="357.3" r="0.9" fill="#e8b470" opacity="0.45"/><circle cx="960.4" cy="331.8" r="1" fill="#c9985a" opacity="0.41"/><circle cx="968.4" cy="327.4" r="0.5" fill="#e8b470" opacity="0.41"/><circle cx="949.8" cy="371.6" r="1" fill="#e8b470" opacity="0.32"/><circle cx="956.8" cy="350.9" r="0.6" fill="#f3c987" opacity="0.35"/><circle cx="962.2" cy="356.1" r="0.8" fill="#e8b470" opacity="0.26"/><circle cx="970.9" cy="355.8" r="1.5" fill="#dba868" opacity="0.38"/><circle cx="1015.1" cy="334.1" r="0.9" fill="#dba868" opacity="0.52"/><circle cx="989.4" cy="361.4" r="0.8" fill="#e8b470" opacity="0.49"/><circle cx="1019.8" cy="323.7" r="1.5" fill="#e8b470" opacity="0.62"/><circle cx="980.5" cy="322.7" r="1.2" fill="#e8b470" opacity="0.68"/><circle cx="969.6" cy="361.4" r="1" fill="#f3c987" opacity="0.36"/><circle cx="972.1" cy="357.7" r="0.7" fill="#dba868" opacity="0.43"/><circle cx="1000.6" cy="336.9" r="0.5" fill="#f3c987" opacity="0.42"/><circle cx="956.9" cy="334.2" r="1.5" fill="#f3c987" opacity="0.56"/><circle cx="1001.2" cy="368.9" r="0.9" fill="#dba868" opacity="0.52"/><circle cx="979.3" cy="377.4" r="0.8" fill="#f3c987" opacity="0.49"/><circle cx="983.3" cy="384.3" r="0.7" fill="#dba868" opacity="0.59"/><circle cx="988" cy="303.7" r="1" fill="#f3c987" opacity="0.33"/><circle cx="1005.1" cy="335.9" r="0.6" fill="#e8b470" opacity="0.34"/><circle cx="995.4" cy="357.4" r="0.7" fill="#f3c987" opacity="0.62"/><circle cx="981.3" cy="349.5" r="0.6" fill="#c9985a" opacity="0.39"/><circle cx="989.3" cy="343" r="1.2" fill="#f3c987" opacity="0.57"/><circle cx="982.5" cy="345.6" r="1.2" fill="#dba868" opacity="0.26"/><circle cx="1007.6" cy="325.4" r="1.2" fill="#dba868" opacity="0.64"/><circle cx="981.2" cy="305" r="1.5" fill="#f3c987" opacity="0.46"/><circle cx="986.5" cy="332.6" r="1.2" fill="#c9985a" opacity="0.37"/><circle cx="986.3" cy="302.8" r="0.9" fill="#c9985a" opacity="0.64"/><circle cx="968.4" cy="353.1" r="1.2" fill="#dba868" opacity="0.50"/><circle cx="1004.4" cy="326.3" r="0.5" fill="#c9985a" opacity="0.44"/><circle cx="999" cy="334.6" r="0.9" fill="#dba868" opacity="0.51"/><circle cx="982.9" cy="273.3" r="0.8" fill="#e8b470" opacity="0.50"/><circle cx="1003.1" cy="316.1" r="0.8" fill="#e8b470" opacity="0.59"/><circle cx="970.8" cy="300.7" r="1" fill="#c9985a" opacity="0.45"/><circle cx="998.6" cy="384.1" r="1.2" fill="#e8b470" opacity="0.49"/><circle cx="988.8" cy="302.9" r="0.5" fill="#c9985a" opacity="0.38"/><circle cx="989.7" cy="344.8" r="1.2" fill="#f3c987" opacity="0.67"/><circle cx="984.6" cy="335.4" r="0.9" fill="#dba868" opacity="0.60"/><circle cx="1036.8" cy="339.4" r="1.5" fill="#dba868" opacity="0.36"/><circle cx="998" cy="337.4" r="0.8" fill="#dba868" opacity="0.47"/><circle cx="995.9" cy="327.2" r="1.2" fill="#f3c987" opacity="0.47"/><circle cx="993.6" cy="300.7" r="1.5" fill="#dba868" opacity="0.42"/><circle cx="990.1" cy="369.6" r="0.9" fill="#dba868" opacity="0.70"/><circle cx="960.4" cy="348" r="0.9" fill="#f3c987" opacity="0.42"/><circle cx="983.3" cy="371.8" r="0.6" fill="#f3c987" opacity="0.56"/><circle cx="1000.6" cy="361.9" r="1.2" fill="#f3c987" opacity="0.29"/><circle cx="994.1" cy="326.6" r="1" fill="#e8b470" opacity="0.55"/><circle cx="985.4" cy="325.6" r="0.6" fill="#f3c987" opacity="0.56"/><circle cx="974" cy="318.4" r="0.8" fill="#c9985a" opacity="0.35"/><circle cx="986.2" cy="355.5" r="1.2" fill="#dba868" opacity="0.62"/><circle cx="971.2" cy="314.3" r="0.6" fill="#f3c987" opacity="0.56"/><circle cx="1000.8" cy="383.6" r="0.6" fill="#c9985a" opacity="0.60"/><circle cx="987.8" cy="329.4" r="0.6" fill="#dba868" opacity="0.38"/><circle cx="1001.3" cy="313.3" r="0.5" fill="#dba868" opacity="0.48"/><circle cx="987.9" cy="321.5" r="0.7" fill="#e8b470" opacity="0.51"/><circle cx="1000.3" cy="363.3" r="1.5" fill="#c9985a" opacity="0.56"/><circle cx="979" cy="363.1" r="0.6" fill="#f3c987" opacity="0.34"/><circle cx="989.2" cy="336.8" r="0.5" fill="#f3c987" opacity="0.57"/><circle cx="994.8" cy="330.1" r="1.5" fill="#dba868" opacity="0.48"/><circle cx="1019.4" cy="351.6" r="0.7" fill="#f3c987" opacity="0.41"/><circle cx="975.4" cy="383.7" r="0.8" fill="#f3c987" opacity="0.39"/><circle cx="972.2" cy="359" r="0.9" fill="#c9985a" opacity="0.39"/><circle cx="974.9" cy="361.3" r="0.9" fill="#f3c987" opacity="0.66"/><circle cx="1017.3" cy="335.5" r="0.6" fill="#f3c987" opacity="0.41"/><circle cx="989.9" cy="327.5" r="0.6" fill="#e8b470" opacity="0.62"/><circle cx="974" cy="363.6" r="1.2" fill="#e8b470" opacity="0.51"/><circle cx="985.2" cy="350.2" r="0.5" fill="#c9985a" opacity="0.35"/><circle cx="972" cy="315.6" r="1.2" fill="#e8b470" opacity="0.54"/><circle cx="998.1" cy="383.2" r="1.5" fill="#dba868" opacity="0.54"/><circle cx="1000.9" cy="352.8" r="0.5" fill="#e8b470" opacity="0.45"/><circle cx="1014" cy="320.5" r="1" fill="#dba868" opacity="0.65"/><circle cx="997.1" cy="306.2" r="0.9" fill="#dba868" opacity="0.65"/><circle cx="978.4" cy="353.8" r="1.2" fill="#e8b470" opacity="0.52"/><circle cx="970.6" cy="342.5" r="0.6" fill="#c9985a" opacity="0.61"/><circle cx="956.9" cy="312.8" r="1.5" fill="#c9985a" opacity="0.29"/><circle cx="945.8" cy="291.8" r="0.7" fill="#c9985a" opacity="0.48"/><circle cx="985" cy="338.4" r="1.5" fill="#dba868" opacity="0.36"/><circle cx="979" cy="320.4" r="0.5" fill="#e8b470" opacity="0.57"/><circle cx="1026.7" cy="337.3" r="0.8" fill="#dba868" opacity="0.65"/><circle cx="978.1" cy="346" r="0.8" fill="#dba868" opacity="0.47"/><circle cx="1006.9" cy="329.3" r="0.7" fill="#e8b470" opacity="0.59"/><circle cx="986" cy="377.2" r="1.5" fill="#f3c987" opacity="0.47"/><circle cx="997" cy="337.1" r="0.5" fill="#e8b470" opacity="0.27"/><circle cx="1011.9" cy="312.8" r="0.6" fill="#f3c987" opacity="0.44"/><circle cx="990.6" cy="324.9" r="1.5" fill="#f3c987" opacity="0.54"/><circle cx="976.5" cy="369.7" r="1.5" fill="#dba868" opacity="0.47"/><circle cx="1011.3" cy="382.4" r="1" fill="#dba868" opacity="0.69"/><circle cx="979.4" cy="320.3" r="1.2" fill="#c9985a" opacity="0.61"/><circle cx="1021" cy="325" r="1" fill="#e8b470" opacity="0.39"/><circle cx="973.6" cy="313.2" r="1" fill="#e8b470" opacity="0.65"/><circle cx="1003.7" cy="308.2" r="0.9" fill="#dba868" opacity="0.53"/><circle cx="972.9" cy="372.4" r="0.8" fill="#f3c987" opacity="0.63"/><circle cx="986.2" cy="318.7" r="0.9" fill="#e8b470" opacity="0.45"/><circle cx="989.7" cy="357.3" r="0.7" fill="#c9985a" opacity="0.39"/><circle cx="987.8" cy="351.9" r="1.5" fill="#dba868" opacity="0.62"/><circle cx="998.6" cy="297.5" r="0.8" fill="#e8b470" opacity="0.40"/><circle cx="983.4" cy="313.2" r="0.8" fill="#e8b470" opacity="0.68"/><circle cx="997.1" cy="311.3" r="0.6" fill="#f3c987" opacity="0.50"/><circle cx="993.8" cy="321.4" r="0.9" fill="#f3c987" opacity="0.66"/><circle cx="968.8" cy="347.6" r="0.8" fill="#e8b470" opacity="0.36"/><circle cx="1003.5" cy="382.3" r="1" fill="#f3c987" opacity="0.52"/><circle cx="974.6" cy="361.8" r="0.7" fill="#c9985a" opacity="0.37"/><circle cx="986.1" cy="351.6" r="1.5" fill="#dba868" opacity="0.62"/><circle cx="990.2" cy="348.5" r="0.9" fill="#e8b470" opacity="0.50"/><circle cx="1001.9" cy="352.8" r="1.5" fill="#dba868" opacity="0.53"/><circle cx="989.8" cy="391.6" r="1.2" fill="#c9985a" opacity="0.31"/><circle cx="995.5" cy="289.4" r="0.7" fill="#e8b470" opacity="0.38"/><circle cx="961.9" cy="420.4" r="1.2" fill="#e8b470" opacity="0.30"/><circle cx="1008.5" cy="348" r="1.5" fill="#e8b470" opacity="0.48"/><circle cx="1008.4" cy="311" r="0.6" fill="#e8b470" opacity="0.58"/><circle cx="991" cy="378.8" r="0.6" fill="#c9985a" opacity="0.69"/><circle cx="1006.1" cy="392.8" r="1" fill="#dba868" opacity="0.70"/><circle cx="1011.7" cy="402.2" r="1" fill="#e8b470" opacity="0.29"/><circle cx="994.8" cy="334.4" r="1.5" fill="#dba868" opacity="0.29"/><circle cx="991.2" cy="344.8" r="0.8" fill="#f3c987" opacity="0.57"/><circle cx="976" cy="325.5" r="0.6" fill="#f3c987" opacity="0.47"/><circle cx="991.6" cy="356.7" r="1.5" fill="#c9985a" opacity="0.43"/><circle cx="992.7" cy="357.9" r="0.5" fill="#dba868" opacity="0.47"/><circle cx="995.1" cy="326.1" r="0.8" fill="#f3c987" opacity="0.30"/><circle cx="999.4" cy="331.9" r="1.5" fill="#c9985a" opacity="0.69"/><circle cx="1005.6" cy="308.3" r="1.5" fill="#f3c987" opacity="0.70"/><circle cx="1000.9" cy="312.8" r="1" fill="#dba868" opacity="0.33"/><circle cx="991" cy="324" r="1.5" fill="#dba868" opacity="0.51"/><circle cx="982.7" cy="348.1" r="1.2" fill="#dba868" opacity="0.45"/><circle cx="1014.6" cy="347.9" r="0.9" fill="#dba868" opacity="0.41"/><circle cx="991.4" cy="355.7" r="1.5" fill="#e8b470" opacity="0.67"/><circle cx="1004.1" cy="370.2" r="0.8" fill="#f3c987" opacity="0.51"/><circle cx="1013.6" cy="374.7" r="1" fill="#f3c987" opacity="0.46"/><circle cx="1032.1" cy="341.2" r="0.6" fill="#c9985a" opacity="0.44"/><circle cx="996.8" cy="336" r="0.9" fill="#e8b470" opacity="0.33"/><circle cx="972.4" cy="354.1" r="0.7" fill="#f3c987" opacity="0.46"/><circle cx="999.4" cy="370.1" r="1.2" fill="#dba868" opacity="0.36"/><circle cx="999.2" cy="355.7" r="0.8" fill="#dba868" opacity="0.58"/><circle cx="965.3" cy="310.2" r="1.5" fill="#dba868" opacity="0.61"/><circle cx="998.6" cy="379.9" r="0.8" fill="#dba868" opacity="0.52"/><circle cx="1013.1" cy="318.7" r="1.2" fill="#e8b470" opacity="0.85"/><circle cx="996.9" cy="317.2" r="0.9" fill="#c9985a" opacity="0.86"/><circle cx="1008.7" cy="322.2" r="1.5" fill="#f3c987" opacity="0.43"/><circle cx="1003.1" cy="327.9" r="1" fill="#f3c987" opacity="0.37"/><circle cx="991.4" cy="311.1" r="1" fill="#c9985a" opacity="0.66"/><circle cx="1005.5" cy="317.4" r="1" fill="#f3c987" opacity="0.78"/><circle cx="1005.4" cy="302.8" r="0.5" fill="#e8b470" opacity="0.52"/><circle cx="1010.4" cy="315.4" r="0.5" fill="#dba868" opacity="0.67"/><circle cx="1020.1" cy="320.6" r="0.8" fill="#dba868" opacity="0.72"/><circle cx="1007" cy="321.5" r="0.5" fill="#dba868" opacity="0.36"/><circle cx="1002.1" cy="332.6" r="1.5" fill="#c9985a" opacity="0.66"/><circle cx="1013.6" cy="327.4" r="0.7" fill="#e8b470" opacity="0.38"/><circle cx="994.4" cy="320.2" r="0.9" fill="#e8b470" opacity="0.42"/><circle cx="1000" cy="320.3" r="0.8" fill="#dba868" opacity="0.87"/><circle cx="999.4" cy="310.5" r="1.2" fill="#e8b470" opacity="0.45"/><circle cx="1009.1" cy="315.1" r="1.2" fill="#e8b470" opacity="0.71"/><circle cx="990.5" cy="329.2" r="1" fill="#dba868" opacity="0.55"/><circle cx="1008.5" cy="307.6" r="1" fill="#e8b470" opacity="0.84"/><circle cx="1001.3" cy="321.9" r="1" fill="#c9985a" opacity="0.50"/><circle cx="1002.5" cy="317" r="0.6" fill="#e8b470" opacity="0.67"/><circle cx="1001" cy="322.6" r="0.5" fill="#c9985a" opacity="0.49"/><circle cx="1014.2" cy="315.5" r="1.5" fill="#e8b470" opacity="0.73"/><circle cx="1012.2" cy="320.4" r="0.9" fill="#f3c987" opacity="0.90"/><circle cx="994.7" cy="307.9" r="0.5" fill="#f3c987" opacity="0.72"/><circle cx="1003.8" cy="318.9" r="0.8" fill="#f3c987" opacity="0.92"/><circle cx="1007.6" cy="322.6" r="0.7" fill="#f3c987" opacity="0.42"/><circle cx="1010.6" cy="323.2" r="0.7" fill="#dba868" opacity="0.61"/><circle cx="1014" cy="306.7" r="0.9" fill="#e8b470" opacity="0.51"/><circle cx="1002.7" cy="311.7" r="1.5" fill="#dba868" opacity="0.72"/><circle cx="1000.4" cy="313.8" r="1" fill="#f3c987" opacity="0.63"/><circle cx="997.4" cy="312.4" r="0.9" fill="#f3c987" opacity="0.37"/><circle cx="1004.4" cy="327.1" r="1.2" fill="#c9985a" opacity="0.93"/><circle cx="1009.1" cy="318.5" r="0.8" fill="#f3c987" opacity="0.54"/><circle cx="997.6" cy="318.3" r="0.8" fill="#e8b470" opacity="0.53"/><circle cx="1004.3" cy="320.4" r="1" fill="#e8b470" opacity="0.61"/><circle cx="990.6" cy="316.4" r="1" fill="#e8b470" opacity="0.79"/><circle cx="983.3" cy="315" r="0.7" fill="#f3c987" opacity="0.60"/><circle cx="1005.8" cy="322" r="0.9" fill="#e8b470" opacity="0.84"/><circle cx="1002.2" cy="305.3" r="1.5" fill="#dba868" opacity="0.51"/><circle cx="1000.4" cy="319.9" r="1.2" fill="#e8b470" opacity="0.81"/><circle cx="986.1" cy="318.3" r="0.7" fill="#f3c987" opacity="0.60"/><circle cx="1009.3" cy="310.5" r="1.2" fill="#c9985a" opacity="0.86"/><circle cx="1001.5" cy="325" r="1" fill="#c9985a" opacity="0.58"/><circle cx="1002.5" cy="317.3" r="1.5" fill="#f3c987" opacity="0.58"/><circle cx="1001.1" cy="309.1" r="0.7" fill="#c9985a" opacity="0.61"/><circle cx="998.8" cy="306.4" r="1" fill="#dba868" opacity="0.54"/><circle cx="1002.2" cy="306.5" r="1.2" fill="#e8b470" opacity="0.88"/><circle cx="1002.5" cy="307.3" r="1.5" fill="#f3c987" opacity="0.53"/><circle cx="988.5" cy="304.6" r="1.2" fill="#f3c987" opacity="0.58"/><circle cx="1004.8" cy="308" r="1.5" fill="#e8b470" opacity="0.92"/><circle cx="998.5" cy="306.8" r="1" fill="#dba868" opacity="0.65"/><circle cx="1006.2" cy="302.1" r="1.5" fill="#f3c987" opacity="0.59"/><circle cx="998" cy="302.7" r="0.6" fill="#f3c987" opacity="0.45"/><circle cx="999.1" cy="307.8" r="0.9" fill="#e8b470" opacity="0.66"/><circle cx="998.5" cy="305.1" r="1" fill="#c9985a" opacity="0.84"/><circle cx="997.3" cy="304.5" r="0.8" fill="#dba868" opacity="0.65"/><circle cx="1016" cy="346.8" r="0.6" fill="#e8b470" opacity="0.56"/><circle cx="1016.8" cy="345.4" r="0.5" fill="#e8b470" opacity="0.53"/><circle cx="1019.9" cy="343.8" r="0.6" fill="#e8b470" opacity="0.70"/><circle cx="1018.3" cy="350.9" r="0.9" fill="#dba868" opacity="0.87"/><circle cx="1014" cy="344" r="0.6" fill="#e8b470" opacity="0.44"/><circle cx="1018.3" cy="346.3" r="1.5" fill="#c9985a" opacity="0.84"/><circle cx="1017.4" cy="344.5" r="0.5" fill="#f3c987" opacity="0.76"/><circle cx="1018.5" cy="348.6" r="0.9" fill="#f3c987" opacity="0.45"/><circle cx="1012.5" cy="339.7" r="0.6" fill="#c9985a" opacity="0.56"/><circle cx="1016.5" cy="345.4" r="0.8" fill="#e8b470" opacity="0.88"/><circle cx="1012.7" cy="348.3" r="0.8" fill="#dba868" opacity="0.48"/><circle cx="1022.9" cy="342.4" r="1" fill="#c9985a" opacity="0.35"/><circle cx="1015.5" cy="351.6" r="1.5" fill="#e8b470" opacity="0.94"/><circle cx="1017.1" cy="350.4" r="0.8" fill="#c9985a" opacity="0.60"/><circle cx="1019.7" cy="342.4" r="0.8" fill="#dba868" opacity="0.40"/><circle cx="1015.7" cy="348.2" r="0.9" fill="#f3c987" opacity="0.59"/><circle cx="1020.1" cy="349.6" r="1.2" fill="#e8b470" opacity="0.55"/><circle cx="1020.4" cy="344.9" r="1" fill="#c9985a" opacity="0.68"/><circle cx="1018" cy="349.4" r="0.8" fill="#f3c987" opacity="0.61"/><circle cx="990.4" cy="383.4" r="0.7" fill="#dba868" opacity="0.50"/><circle cx="996.6" cy="387.4" r="0.7" fill="#c9985a" opacity="0.68"/><circle cx="998.1" cy="380.9" r="0.7" fill="#dba868" opacity="0.57"/><circle cx="992.1" cy="382.8" r="0.8" fill="#c9985a" opacity="0.53"/><circle cx="989.1" cy="385.9" r="1.5" fill="#f3c987" opacity="0.76"/><circle cx="988.1" cy="384" r="1" fill="#c9985a" opacity="0.67"/><circle cx="990" cy="384.6" r="0.6" fill="#e8b470" opacity="0.76"/><circle cx="988.8" cy="385.3" r="1.2" fill="#dba868" opacity="0.37"/><circle cx="991" cy="389" r="0.6" fill="#dba868" opacity="0.77"/><circle cx="989.5" cy="390.4" r="0.6" fill="#f3c987" opacity="0.39"/><circle cx="996.2" cy="380.8" r="0.8" fill="#f3c987" opacity="0.39"/><circle cx="996.9" cy="387.4" r="1.2" fill="#c9985a" opacity="0.52"/><circle cx="996.4" cy="382.9" r="0.7" fill="#dba868" opacity="0.91"/><circle cx="1001.2" cy="386.9" r="1" fill="#e8b470" opacity="0.89"/><circle cx="988.4" cy="381.7" r="0.8" fill="#c9985a" opacity="0.95"/><circle cx="988.4" cy="389.7" r="0.7" fill="#f3c987" opacity="0.52"/><circle cx="1000.6" cy="383.2" r="0.5" fill="#dba868" opacity="0.59"/><circle cx="984.6" cy="388.3" r="0.7" fill="#e8b470" opacity="0.58"/><circle cx="985.7" cy="384.5" r="0.7" fill="#dba868" opacity="0.69"/><circle cx="947.1" cy="346.1" r="0.9" fill="#f3c987" opacity="0.81"/><circle cx="952.2" cy="347.5" r="0.9" fill="#e8b470" opacity="0.80"/><circle cx="955.1" cy="347.3" r="0.5" fill="#dba868" opacity="0.74"/><circle cx="951.4" cy="345.5" r="0.6" fill="#c9985a" opacity="0.54"/><circle cx="954.8" cy="348" r="0.8" fill="#e8b470" opacity="0.47"/><circle cx="947.1" cy="353.5" r="1.5" fill="#c9985a" opacity="0.82"/><circle cx="946.9" cy="347.8" r="0.8" fill="#dba868" opacity="0.55"/><circle cx="949.2" cy="348.1" r="0.9" fill="#dba868" opacity="0.41"/><circle cx="982.7" cy="328.5" r="0.9" fill="#e8b470" opacity="0.45"/><circle cx="977.5" cy="334.4" r="0.6" fill="#f3c987" opacity="0.42"/><circle cx="980.5" cy="336.4" r="1.5" fill="#dba868" opacity="0.68"/><circle cx="974.8" cy="329.4" r="1.5" fill="#f3c987" opacity="0.39"/><circle cx="974.1" cy="327.2" r="0.7" fill="#dba868" opacity="0.63"/><circle cx="969.9" cy="338.7" r="1.2" fill="#dba868" opacity="0.73"/><circle cx="973.6" cy="327.1" r="1.5" fill="#c9985a" opacity="0.77"/><circle cx="976.3" cy="327.6" r="0.9" fill="#c9985a" opacity="0.32"/><circle cx="975.5" cy="331.9" r="0.9" fill="#e8b470" opacity="0.48"/><circle cx="973.2" cy="324.3" r="0.6" fill="#c9985a" opacity="0.40"/><circle cx="969.9" cy="331" r="0.7" fill="#e8b470" opacity="0.62"/><circle cx="992.1" cy="331.2" r="1.5" fill="#f3c987" opacity="0.36"/><circle cx="982" cy="329.1" r="0.6" fill="#c9985a" opacity="0.66"/><circle cx="965.4" cy="330.7" r="1" fill="#e8b470" opacity="0.32"/><circle cx="970.2" cy="323.9" r="0.9" fill="#e8b470" opacity="0.67"/><circle cx="975.8" cy="331" r="1.2" fill="#f3c987" opacity="0.77"/><circle cx="1020.5" cy="306.6" r="0.7" fill="#f3c987" opacity="0.25"/><circle cx="1029.8" cy="282.2" r="0.7" fill="#f3c987" opacity="0.44"/><circle cx="1027.7" cy="297.6" r="1" fill="#f3c987" opacity="0.51"/><circle cx="1030.1" cy="292.5" r="1.2" fill="#dba868" opacity="0.54"/><circle cx="1023.5" cy="290.4" r="0.7" fill="#e8b470" opacity="0.57"/><circle cx="1032.5" cy="294.9" r="0.7" fill="#c9985a" opacity="0.37"/><circle cx="1031.3" cy="291.3" r="1.5" fill="#dba868" opacity="0.38"/><circle cx="1029.9" cy="289.4" r="1.2" fill="#e8b470" opacity="0.26"/><circle cx="1026.5" cy="281" r="1.2" fill="#e8b470" opacity="0.53"/><circle cx="1022.5" cy="294.9" r="0.7" fill="#dba868" opacity="0.54"/><circle cx="1029.6" cy="290.6" r="1" fill="#c9985a" opacity="0.41"/><circle cx="1034.2" cy="294" r="1.5" fill="#dba868" opacity="0.36"/><circle cx="1043.9" cy="286.4" r="0.6" fill="#e8b470" opacity="0.50"/><circle cx="1029.2" cy="282.2" r="0.9" fill="#c9985a" opacity="0.41"/><circle cx="1047.6" cy="318.7" r="0.7" fill="#f3c987" opacity="0.53"/><circle cx="1039.4" cy="319" r="0.8" fill="#c9985a" opacity="0.48"/><circle cx="1043.3" cy="318" r="1" fill="#c9985a" opacity="0.68"/><circle cx="1042.4" cy="322.2" r="1.5" fill="#e8b470" opacity="0.59"/><circle cx="1045.2" cy="330" r="0.8" fill="#e8b470" opacity="0.68"/><circle cx="1045.1" cy="327.2" r="0.6" fill="#f3c987" opacity="0.46"/><circle cx="1043.4" cy="317.3" r="1.5" fill="#e8b470" opacity="0.49"/><circle cx="1043.3" cy="311.6" r="0.6" fill="#e8b470" opacity="0.86"/><circle cx="1044.6" cy="318" r="0.6" fill="#e8b470" opacity="0.73"/><circle cx="1039.1" cy="321.5" r="0.7" fill="#dba868" opacity="0.93"/><circle cx="1038.7" cy="317.4" r="0.7" fill="#e8b470" opacity="0.57"/><circle cx="1043.2" cy="320.7" r="0.5" fill="#dba868" opacity="0.36"/><circle cx="1042.4" cy="320.5" r="0.7" fill="#e8b470" opacity="0.61"/><circle cx="1039.2" cy="314.6" r="0.6" fill="#f3c987" opacity="0.90"/><circle cx="1046.7" cy="325.5" r="1" fill="#e8b470" opacity="0.83"/><circle cx="1044.8" cy="318.2" r="1" fill="#f3c987" opacity="0.66"/><circle cx="1043.8" cy="318.9" r="1" fill="#f3c987" opacity="0.41"/><circle cx="1044.5" cy="318.2" r="0.8" fill="#dba868" opacity="0.50"/><circle cx="1043.8" cy="319.3" r="1.5" fill="#e8b470" opacity="0.42"/><circle cx="1067.7" cy="326" r="0.9" fill="#f3c987" opacity="0.46"/><circle cx="1078.8" cy="316.8" r="0.7" fill="#f3c987" opacity="0.70"/><circle cx="1057.9" cy="330.7" r="0.9" fill="#e8b470" opacity="0.92"/><circle cx="1098.9" cy="309.2" r="1.5" fill="#e8b470" opacity="0.65"/><circle cx="1071.4" cy="323.1" r="0.7" fill="#c9985a" opacity="0.72"/><circle cx="1081" cy="312.7" r="1.5" fill="#e8b470" opacity="0.59"/><circle cx="1065.3" cy="329.7" r="0.9" fill="#e8b470" opacity="0.89"/><circle cx="1076.8" cy="325.2" r="1.5" fill="#c9985a" opacity="0.55"/><circle cx="1065.6" cy="328.7" r="0.5" fill="#c9985a" opacity="0.55"/><circle cx="1070.3" cy="324.8" r="1.5" fill="#e8b470" opacity="0.88"/><circle cx="1060.3" cy="327.2" r="0.7" fill="#f3c987" opacity="0.51"/><circle cx="1096.7" cy="312.2" r="1" fill="#dba868" opacity="0.69"/><circle cx="1073.2" cy="322.7" r="0.6" fill="#c9985a" opacity="0.87"/><circle cx="1061.7" cy="326.7" r="1" fill="#dba868" opacity="0.83"/><circle cx="1083.3" cy="312.6" r="0.6" fill="#f3c987" opacity="0.53"/><circle cx="1069" cy="322.1" r="0.8" fill="#c9985a" opacity="0.56"/><circle cx="1065.7" cy="330.5" r="1" fill="#c9985a" opacity="0.88"/><circle cx="1052.8" cy="334.4" r="0.8" fill="#dba868" opacity="0.95"/><circle cx="1071.8" cy="323.8" r="1.5" fill="#c9985a" opacity="0.59"/><circle cx="1064" cy="327.1" r="0.7" fill="#dba868" opacity="0.70"/><circle cx="1069.6" cy="326.9" r="1" fill="#dba868" opacity="0.39"/><circle cx="1067.7" cy="325.4" r="0.7" fill="#f3c987" opacity="0.53"/><circle cx="1079" cy="319.2" r="1.2" fill="#e8b470" opacity="0.78"/><circle cx="1074.2" cy="320.3" r="0.7" fill="#f3c987" opacity="0.52"/><circle cx="1056.6" cy="331.1" r="0.9" fill="#e8b470" opacity="0.49"/><circle cx="1073.8" cy="324.9" r="0.8" fill="#f3c987" opacity="0.89"/><circle cx="1077.9" cy="317.2" r="0.8" fill="#e8b470" opacity="0.50"/><circle cx="1082" cy="316.9" r="0.6" fill="#f3c987" opacity="0.39"/><circle cx="1082" cy="299.2" r="0.9" fill="#e8b470" opacity="0.54"/><circle cx="1079.6" cy="286.6" r="0.8" fill="#e8b470" opacity="0.43"/><circle cx="1081" cy="293.7" r="1" fill="#c9985a" opacity="0.36"/><circle cx="1082.2" cy="296.8" r="1" fill="#c9985a" opacity="0.65"/><circle cx="1081.9" cy="308.6" r="0.5" fill="#f3c987" opacity="0.29"/><circle cx="1077.5" cy="291.1" r="0.5" fill="#f3c987" opacity="0.48"/><circle cx="1082.2" cy="301.2" r="0.8" fill="#e8b470" opacity="0.35"/><circle cx="1081" cy="305.7" r="1" fill="#dba868" opacity="0.54"/><circle cx="1080.8" cy="291.3" r="1" fill="#f3c987" opacity="0.39"/><circle cx="1082.7" cy="291.9" r="0.5" fill="#f3c987" opacity="0.65"/><circle cx="1080.8" cy="292.1" r="1.5" fill="#f3c987" opacity="0.55"/><circle cx="1021.4" cy="380.2" r="0.7" fill="#c9985a" opacity="0.45"/><circle cx="1025.6" cy="383.3" r="1" fill="#dba868" opacity="0.40"/><circle cx="1021.5" cy="384.6" r="0.5" fill="#e8b470" opacity="0.65"/><circle cx="1025.2" cy="382" r="0.7" fill="#f3c987" opacity="0.45"/><circle cx="1023.8" cy="376.3" r="0.7" fill="#f3c987" opacity="0.60"/><circle cx="1024.1" cy="379.4" r="1.5" fill="#f3c987" opacity="0.43"/><circle cx="989.8" cy="530.8" r="0.8" fill="#e8b470" opacity="0.54"/><circle cx="994.8" cy="534.3" r="0.6" fill="#c9985a" opacity="0.83"/><circle cx="975.2" cy="527.8" r="0.8" fill="#c9985a" opacity="0.69"/><circle cx="989.8" cy="530.8" r="0.8" fill="#e8b470" opacity="0.37"/><circle cx="978.7" cy="531.6" r="0.8" fill="#f3c987" opacity="0.56"/><circle cx="981.4" cy="527.8" r="0.9" fill="#c9985a" opacity="0.88"/><circle cx="982.9" cy="532.6" r="0.7" fill="#f3c987" opacity="0.64"/><circle cx="986.2" cy="530.8" r="0.9" fill="#f3c987" opacity="0.52"/><circle cx="1004.1" cy="534.3" r="0.8" fill="#c9985a" opacity="0.45"/><circle cx="980.8" cy="530.7" r="0.8" fill="#f3c987" opacity="0.86"/><circle cx="999.5" cy="534.3" r="1.5" fill="#dba868" opacity="0.46"/><circle cx="990" cy="531.7" r="0.5" fill="#dba868" opacity="0.83"/><circle cx="981.6" cy="530.2" r="0.9" fill="#f3c987" opacity="0.44"/><circle cx="985.8" cy="531.6" r="1.2" fill="#f3c987" opacity="0.40"/><circle cx="969.3" cy="526.2" r="1.2" fill="#e8b470" opacity="0.88"/><circle cx="973.2" cy="528.2" r="0.5" fill="#dba868" opacity="0.37"/><circle cx="963.8" cy="526" r="0.5" fill="#f3c987" opacity="0.38"/><circle cx="985.2" cy="531.2" r="1.5" fill="#c9985a" opacity="0.93"/><circle cx="988.5" cy="531.5" r="0.7" fill="#e8b470" opacity="0.73"/><circle cx="957.7" cy="525.5" r="0.6" fill="#dba868" opacity="0.56"/><circle cx="999.9" cy="529.9" r="0.8" fill="#f3c987" opacity="0.79"/><circle cx="979.4" cy="529.6" r="0.9" fill="#e8b470" opacity="0.39"/><circle cx="981.1" cy="530.7" r="1" fill="#f3c987" opacity="0.51"/><circle cx="973.8" cy="526.7" r="0.9" fill="#c9985a" opacity="0.68"/><circle cx="1004.2" cy="533.9" r="0.9" fill="#f3c987" opacity="0.59"/><circle cx="933.3" cy="425.9" r="0.7" fill="#c9985a" opacity="0.41"/><circle cx="942.1" cy="421.6" r="0.5" fill="#f3c987" opacity="0.35"/><circle cx="934.8" cy="420.3" r="0.8" fill="#e8b470" opacity="0.59"/><circle cx="941.6" cy="430.2" r="0.5" fill="#e8b470" opacity="0.63"/><circle cx="932.9" cy="430.1" r="1.5" fill="#f3c987" opacity="0.48"/><circle cx="932.1" cy="428.6" r="1.5" fill="#c9985a" opacity="0.56"/><circle cx="931.9" cy="426.6" r="1.2" fill="#c9985a" opacity="0.34"/><circle cx="936.1" cy="428.3" r="0.9" fill="#f3c987" opacity="0.50"/><circle cx="943.2" cy="430.4" r="0.8" fill="#f3c987" opacity="0.63"/><circle cx="936.4" cy="435.4" r="1" fill="#c9985a" opacity="0.46"/><circle cx="923.6" cy="419.7" r="0.6" fill="#f3c987" opacity="0.63"/><circle cx="959.3" cy="400.6" r="1" fill="#dba868" opacity="0.30"/><circle cx="963.9" cy="411.3" r="0.7" fill="#e8b470" opacity="0.44"/><circle cx="961.1" cy="408.6" r="1.2" fill="#dba868" opacity="0.25"/><circle cx="961.4" cy="394.9" r="1" fill="#f3c987" opacity="0.34"/><circle cx="961.1" cy="403" r="1.2" fill="#c9985a" opacity="0.31"/><circle cx="961.2" cy="394.1" r="1.5" fill="#dba868" opacity="0.47"/><circle cx="962.1" cy="397.6" r="0.7" fill="#dba868" opacity="0.34"/><circle cx="960.1" cy="395.5" r="1.2" fill="#dba868" opacity="0.30"/><circle cx="963.7" cy="402" r="0.7" fill="#f3c987" opacity="0.32"/><circle cx="941.8" cy="485.9" r="0.9" fill="#e8b470" opacity="0.51"/><circle cx="936.8" cy="487" r="0.6" fill="#c9985a" opacity="0.28"/><circle cx="942.2" cy="486.8" r="1" fill="#c9985a" opacity="0.54"/><circle cx="939.4" cy="489.1" r="0.9" fill="#c9985a" opacity="0.56"/><circle cx="937" cy="479.9" r="1" fill="#dba868" opacity="0.30"/><circle cx="941.6" cy="486.4" r="1" fill="#dba868" opacity="0.23"/><circle cx="939.5" cy="489.9" r="1.5" fill="#c9985a" opacity="0.35"/><circle cx="934.1" cy="488.3" r="0.5" fill="#c9985a" opacity="0.25"/><circle cx="1043.9" cy="420.9" r="1.2" fill="#c9985a" opacity="0.30"/><circle cx="1040.5" cy="427.2" r="1.2" fill="#e8b470" opacity="0.32"/><circle cx="1037.8" cy="415.5" r="1.2" fill="#f3c987" opacity="0.34"/><circle cx="1035.6" cy="421.2" r="1.5" fill="#dba868" opacity="0.21"/><circle cx="1042.1" cy="418" r="0.5" fill="#e8b470" opacity="0.21"/><circle cx="1041.1" cy="421.2" r="1.5" fill="#dba868" opacity="0.19"/><circle cx="1039.2" cy="417.6" r="0.5" fill="#c9985a" opacity="0.34"/><circle cx="1040.8" cy="422" r="1.2" fill="#dba868" opacity="0.42"/><circle cx="1043.2" cy="596.5" r="0.5" fill="#f3c987" opacity="0.32"/><circle cx="1042.2" cy="589.4" r="1.2" fill="#f3c987" opacity="0.35"/><circle cx="1037.6" cy="585.5" r="1.2" fill="#f3c987" opacity="0.53"/><circle cx="1040.6" cy="610.8" r="1.2" fill="#f3c987" opacity="0.60"/><circle cx="1043.8" cy="595.5" r="0.8" fill="#f3c987" opacity="0.47"/><circle cx="1053.8" cy="583.4" r="0.7" fill="#f3c987" opacity="0.40"/><circle cx="1049.6" cy="613.5" r="0.5" fill="#e8b470" opacity="0.55"/><circle cx="1038.4" cy="587.7" r="1" fill="#dba868" opacity="0.26"/><circle cx="1046.6" cy="581.2" r="0.8" fill="#c9985a" opacity="0.58"/><circle cx="1036.2" cy="599.9" r="0.8" fill="#e8b470" opacity="0.61"/><circle cx="1050.5" cy="609.7" r="0.6" fill="#e8b470" opacity="0.27"/><circle cx="1048" cy="578.1" r="0.5" fill="#dba868" opacity="0.63"/><circle cx="1035.1" cy="590.2" r="0.9" fill="#dba868" opacity="0.58"/><circle cx="1054" cy="609.5" r="0.8" fill="#c9985a" opacity="0.46"/><circle cx="1054.6" cy="600.9" r="0.5" fill="#f3c987" opacity="0.42"/><circle cx="1043.1" cy="578.6" r="1.2" fill="#e8b470" opacity="0.31"/><circle cx="1048.1" cy="587.3" r="0.7" fill="#f3c987" opacity="0.60"/><circle cx="1045.7" cy="567.6" r="1" fill="#dba868" opacity="0.54"/><circle cx="1043.1" cy="597.9" r="0.8" fill="#dba868" opacity="0.31"/><circle cx="1043.7" cy="591.8" r="1.2" fill="#f3c987" opacity="0.31"/><circle cx="1046.4" cy="603.6" r="0.6" fill="#dba868" opacity="0.33"/><circle cx="1044" cy="578.4" r="1.2" fill="#f3c987" opacity="0.29"/><circle cx="1055.8" cy="607.3" r="0.6" fill="#f3c987" opacity="0.37"/><circle cx="1056.4" cy="592.1" r="0.6" fill="#f3c987" opacity="0.33"/><circle cx="1050.8" cy="578.8" r="0.6" fill="#c9985a" opacity="0.33"/><circle cx="1043.1" cy="613.1" r="0.8" fill="#f3c987" opacity="0.49"/><circle cx="1053.7" cy="593" r="0.5" fill="#dba868" opacity="0.39"/><circle cx="1043.8" cy="587.1" r="1" fill="#c9985a" opacity="0.39"/><circle cx="1045.2" cy="608.1" r="0.7" fill="#f3c987" opacity="0.29"/><circle cx="1048.8" cy="573.6" r="1.5" fill="#e8b470" opacity="0.29"/><circle cx="1047.1" cy="575.6" r="1.5" fill="#e8b470" opacity="0.26"/><circle cx="1042" cy="589.6" r="0.7" fill="#f3c987" opacity="0.42"/><circle cx="1054.4" cy="598.2" r="0.7" fill="#e8b470" opacity="0.40"/><circle cx="1038.8" cy="608.4" r="1.5" fill="#f3c987" opacity="0.37"/><circle cx="1056.3" cy="602.6" r="0.6" fill="#f3c987" opacity="0.31"/><circle cx="1078.4" cy="574.9" r="1.5" fill="#e8b470" opacity="0.25"/><circle cx="1076.8" cy="575.6" r="0.8" fill="#dba868" opacity="0.26"/><circle cx="1087.2" cy="574.4" r="0.8" fill="#e8b470" opacity="0.44"/><circle cx="1080.9" cy="578" r="0.8" fill="#dba868" opacity="0.38"/><circle cx="1081.7" cy="579.2" r="0.9" fill="#c9985a" opacity="0.47"/><circle cx="1076.9" cy="583.4" r="0.9" fill="#e8b470" opacity="0.35"/><circle cx="1083.7" cy="582.6" r="0.8" fill="#e8b470" opacity="0.25"/><circle cx="1080.6" cy="572.5" r="1" fill="#e8b470" opacity="0.47"/><circle cx="1081.2" cy="592.6" r="0.7" fill="#f3c987" opacity="0.42"/><circle cx="1084.8" cy="584.4" r="0.7" fill="#c9985a" opacity="0.18"/><circle cx="1080.2" cy="573.5" r="0.8" fill="#dba868" opacity="0.22"/><circle cx="1106.5" cy="587.4" r="0.7" fill="#dba868" opacity="0.17"/><circle cx="1092.6" cy="565.7" r="0.6" fill="#c9985a" opacity="0.33"/><circle cx="1114.4" cy="582.8" r="1" fill="#e8b470" opacity="0.31"/><circle cx="1105.3" cy="593.2" r="1" fill="#e8b470" opacity="0.29"/><circle cx="1081.2" cy="558.6" r="0.7" fill="#c9985a" opacity="0.29"/><circle cx="1090.7" cy="565.5" r="0.7" fill="#f3c987" opacity="0.18"/><circle cx="1116.5" cy="570.8" r="0.7" fill="#f3c987" opacity="0.21"/><circle cx="1099.8" cy="566.7" r="0.6" fill="#f3c987" opacity="0.14"/><circle cx="1100.1" cy="560.8" r="0.8" fill="#c9985a" opacity="0.16"/><circle cx="858.2" cy="246.5" r="0.5" fill="#c9985a" opacity="0.23"/><circle cx="909" cy="239" r="1" fill="#c9985a" opacity="0.34"/><circle cx="915" cy="252.5" r="1" fill="#c9985a" opacity="0.30"/><circle cx="900.6" cy="254" r="1.5" fill="#e8b470" opacity="0.28"/><circle cx="918" cy="246.3" r="1.2" fill="#c9985a" opacity="0.29"/><circle cx="916.8" cy="266" r="0.6" fill="#c9985a" opacity="0.22"/><circle cx="886.6" cy="248.8" r="0.6" fill="#dba868" opacity="0.38"/><circle cx="892.8" cy="243.7" r="0.8" fill="#e8b470" opacity="0.17"/><circle cx="866.7" cy="271.5" r="1.2" fill="#dba868" opacity="0.21"/><circle cx="889.8" cy="261" r="1.2" fill="#f3c987" opacity="0.21"/><circle cx="925.2" cy="251.4" r="0.8" fill="#dba868" opacity="0.35"/><circle cx="897.7" cy="255.9" r="0.7" fill="#dba868" opacity="0.16"/><circle cx="861.6" cy="260.6" r="0.9" fill="#e8b470" opacity="0.32"/><circle cx="935.7" cy="253.3" r="1.2" fill="#f3c987" opacity="0.17"/><circle cx="895.6" cy="251.2" r="1" fill="#f3c987" opacity="0.25"/><circle cx="879.1" cy="267.4" r="1.2" fill="#e8b470" opacity="0.37"/><circle cx="813.5" cy="291.1" r="1" fill="#e8b470" opacity="0.31"/><circle cx="824.4" cy="309.1" r="0.6" fill="#c9985a" opacity="0.27"/><circle cx="793.8" cy="315.3" r="0.7" fill="#c9985a" opacity="0.31"/><circle cx="811.9" cy="302.7" r="0.7" fill="#f3c987" opacity="0.14"/><circle cx="811.3" cy="314.4" r="0.5" fill="#dba868" opacity="0.38"/><circle cx="799.7" cy="280.3" r="0.9" fill="#dba868" opacity="0.29"/><circle cx="795.6" cy="316.7" r="1.2" fill="#c9985a" opacity="0.27"/><circle cx="785.2" cy="280" r="1.2" fill="#f3c987" opacity="0.26"/><circle cx="796" cy="289.7" r="0.7" fill="#c9985a" opacity="0.34"/><circle cx="811.2" cy="278.3" r="1" fill="#dba868" opacity="0.35"/><circle cx="772" cy="297.2" r="0.7" fill="#dba868" opacity="0.21"/><circle cx="787.5" cy="272.7" r="0.9" fill="#f3c987" opacity="0.37"/></g>
<circle cx="958" cy="436" r="274" fill="url(#eld)"/>
<g mask="url(#emk)"><circle cx="958" cy="436" r="272" fill="url(#eg)"/><circle cx="958" cy="436" r="272" fill="url(#er)"/></g>
<circle cx="958" cy="436" r="272" fill="url(#er)" opacity=".04"/>
</g></g>
</svg><!--/EARTH-->


<!-- left panel content -->
<div id="tab1" class="a tab"><span>NO USF</span></div>
<div id="tab2" class="a tab"><span>SRT</span></div>
<div id="fbtn" class="a"><div class="a h1"></div><div class="a h2"></div>
<svg width="76" height="36" viewBox="0 0 76 36" style="left:0;top:0">
<g transform="translate(0 -.7)"><path d="M11.500 9 h13.500 l5 5 v13.500 a1.500 1.500 0 0 1 -1.500 1.500 h-17 a1.500 1.500 0 0 1 -1.500 -1.500 v-17 a1.500 1.500 0 0 1 1.500 -1.500 z" fill="#b9d0e6"/>
<rect x="12.500" y="11" width="11" height="4" fill="#566779"/>
<circle cx="20" cy="23" r="3.400" fill="#4b5c6e"/></g>
<path d="M46 13.300 a1.500 1.500 0 0 1 1.500 -1.500 h5.800 l2 2 h8.200 a1.500 1.500 0 0 1 1.500 1.500 v9 a1.500 1.500 0 0 1 -1.500 1.500 h-16 a1.500 1.500 0 0 1 -1.500 -1.500 z" fill="none" stroke="#bdd3e8" stroke-width="1.300"/>
</svg></div>
<div id="msg" class="a">Actual video does not have saved subtitle<br>file.</div>
<svg width="30" height="90" viewBox="0 0 30 90" style="left:343px;top:25px">
<path d="M21 0 H27 V90 H26 V79 L21 77.500 z" fill="#07090c"/>
<path d="M2 0 V70.500 Q2 71.600 3 71.900 L21.500 77.200 V0 z" fill="#7f95a8"/>
<path d="M1.500 0 V70.500 Q1.500 71.900 3 72.300 L22 77.700" fill="none" stroke="#1f2933" stroke-width="1.200"/>
<path d="M22 0 V77.500 L25 78.500 V90" fill="none" stroke="#3a434c" stroke-width="2"/>
<path d="M8.500 20 V60 M11.500 20 V60 M14.500 20 V60" stroke="#98abbb" stroke-width="1"/>
</svg>
<div class="a" style="left:367px;top:113px;width:2px;height:740px;background:#353f49"></div>
<div id="list" class="a"></div>
<div id="row" class="a"><span class="u" style="transform:scaleX(.9)">1 -</span></div>
<div id="find" class="a"><span class="uc" style="transform:scaleX(.95)">FIND</span></div>
<!-- right panel content -->
<svg width="30" height="90" viewBox="0 0 30 90" style="left:1550px;top:25px">
<path d="M1 0 H5 V77.500 L2 78.500 V90 H1 z" fill="#07090c"/>
<path d="M6 0 V77.200 L24.500 71.900 Q25.500 71.600 25.500 70.500 V0 z" fill="#7f95a8"/>
<path d="M5 77.700 L24.500 72.300 Q25.500 71.900 25.500 70.500 V0" fill="none" stroke="#1f2933" stroke-width="1.200"/>
<path d="M5 0 V77.500 L2 78.500 V90" fill="none" stroke="#3a434c" stroke-width="2"/>
<path d="M11.500 20 V60 M14.500 20 V60 M17.500 20 V60" stroke="#98abbb" stroke-width="1"/>
</svg>
<div class="a" style="left:1551px;top:113px;width:2px;height:740px;background:#353f49"></div>
<div class="a stat" style="top:48px"><span class="u">WORDS:</span></div>
<div class="a statv" style="top:60px">1</div>
<div class="a stat" style="top:92px"><span class="u">CHARACTERS:</span></div>
<div class="a statv" style="top:104px">0</div>

<div id="sendbar" class="a"></div>
<div id="textbox" class="a"></div>
<div class="a" style="left:1577px;top:636px;width:1px;height:30px;background:#000"></div>
<svg width="22" height="18" viewBox="0 0 22 18" style="left:1605px;top:606px">
<path d="M1 1 H3.500 V17 H1 z M5 1 H21.200 V5.500 H16 Q12.500 5.500 12.500 9 Q12.500 12.500 16 12.500 H21.200 V17 H5 z" fill="#b9d0e6"/>
<circle cx="7" cy="9" r="4.300" fill="#b9d0e6" stroke="#4f6072" stroke-width="1.100"/>
<path d="M8 6.800 L5.800 9 L8 11.200" fill="none" stroke="#4f6072" stroke-width="1.200"/>
</svg>
<div class="a sendt" style="left:1630px"><span class="u" style="transform:scaleX(.885)">SEND TO LAST</span></div>
<svg width="22" height="18" viewBox="0 0 22 18" style="left:1763px;top:606px">
<path d="M21 1 H18.500 V17 H21 z M17 1 H0.800 V5.500 H6 Q9.500 5.500 9.500 9 Q9.500 12.500 6 12.500 H0.800 V17 H17 z" fill="#b9d0e6"/>
<circle cx="15" cy="9" r="4.300" fill="#b9d0e6" stroke="#4f6072" stroke-width="1.100"/>
<path d="M14 6.800 L16.200 9 L14 11.200" fill="none" stroke="#4f6072" stroke-width="1.200"/>
</svg>
<div class="a sendt" style="left:1788px"><span class="u" style="transform:scaleX(.885)">SEND TO NEXT</span></div>

<div id="toolbar" class="a"></div>
<div id="timeline" class="a"></div>
<!--TB--><div class="a tb" style="left:388.5px;width:30.0px"><i></i><svg width="30" height="24" viewBox="0 0 30 24" style="left:0;top:0"><path d="M9 3.500 l2 2.800 l-2 2.800 M21.500 3.500 l2 2.800 l-2 2.800" fill="none" stroke="#3b4d60" stroke-width="1.100"/><path d="M9.0 14.8 v1.0 M9.7 14.3 v2.0 M10.4 13.3 v4.0 M11.2 12.3 v6.0 M11.9 11.8 v7.0 M12.6 12.8 v5.0 M13.3 12.3 v6.0 M14.0 13.3 v4.0 M14.8 13.8 v3.0 M15.5 14.3 v2.0 M16.2 14.8 v1.0 M16.9 15.0 v0.6 M17.6 15.0 v0.6 M18.4 14.8 v1.0 M19.1 14.3 v2.0 M19.8 13.6 v3.5 M20.5 14.1 v2.5 M21.2 13.8 v3.0 M22.0 14.6 v1.5 M22.7 14.8 v1.0 " stroke="#3b4d60" stroke-width=".85" fill="none"/></svg></div>
<div class="a tb on" style="left:419px;width:29.5px"><i></i><svg width="30" height="24" viewBox="0 0 30 24" style="left:0;top:0"><path d="M8.500 3.500 V19 " fill="none" stroke="#3b4d60" stroke-width="1.300"/><path d="M10.800 3.500 l2 2.800 l-2 2.800" fill="none" stroke="#3b4d60" stroke-width="1.100"/><path d="M9.0 14.8 v1.0 M9.7 14.3 v2.0 M10.4 13.3 v4.0 M11.2 12.3 v6.0 M11.9 11.8 v7.0 M12.6 12.8 v5.0 M13.3 12.3 v6.0 M14.0 13.3 v4.0 M14.8 13.8 v3.0 M15.5 14.3 v2.0 M16.2 14.8 v1.0 M16.9 15.0 v0.6 M17.6 15.0 v0.6 M18.4 14.8 v1.0 M19.1 14.3 v2.0 M19.8 13.6 v3.5 M20.5 14.1 v2.5 M21.2 13.8 v3.0 M22.0 14.6 v1.5 M22.7 14.8 v1.0 " stroke="#3b4d60" stroke-width=".85" fill="none"/></svg></div>
<div class="a tb" style="left:449px;width:29px"><i></i><svg width="30" height="24" viewBox="0 0 30 24" style="left:0;top:0"><path d="M16 3.500 V19" fill="none" stroke="#3b4d60" stroke-width="1.500" opacity=".7"/><path d="M11.500 3.500 l2 2.800 l-2 2.800 M18.200 3.500 l2 2.800 l-2 2.800" fill="none" stroke="#3b4d60" stroke-width="1.100"/><path d="M9.5 14.8 v1.0 M10.2 14.3 v2.0 M10.9 13.3 v4.0 M11.7 12.3 v6.0 M12.4 11.8 v7.0 M13.1 12.8 v5.0 M13.8 12.3 v6.0 M14.5 13.3 v4.0 M15.3 13.8 v3.0 M16.0 14.3 v2.0 M16.7 14.8 v1.0 M17.4 15.0 v0.6 M18.1 15.0 v0.6 M18.9 14.8 v1.0 M19.6 14.3 v2.0 M20.3 13.6 v3.5 M21.0 14.1 v2.5 M21.7 13.8 v3.0 M22.5 14.6 v1.5 M23.2 14.8 v1.0 " stroke="#3b4d60" stroke-width=".85" fill="none"/></svg></div>
<div class="a tb" style="left:483.5px;width:50.0px"><i></i><span class="lbl" style="left:7.500px"><span class="u">GRID</span></span></div>
<div class="a tb dis" style="left:534.5px;width:29.0px"><i></i><svg width="30" height="24" viewBox="0 0 30 24" style="left:-1px;top:-1px"><path d="M8 3.500 V17.500 H10.800 V6.500 M13.200 3.500 V17.500 H16 V6.500 M18.400 3.500 V17.500 H21.200 V6.500" fill="none" stroke="#9c9496" stroke-width=".9"/></svg></div>
<div class="a tb dis" style="left:564.5px;width:29.0px"><i></i><svg width="30" height="24" viewBox="0 0 30 24" style="left:-1px;top:-1px"><path d="M8 3.500 V18" fill="none" stroke="#9c9496" stroke-width="1"/><text x="10" y="17.500" font-family="Liberation Sans,sans-serif" font-size="9" font-weight="bold" fill="#9c9496">1s</text></svg></div>
<div class="a tb dis" style="left:594.5px;width:28.5px"><i></i><svg width="30" height="24" viewBox="0 0 30 24" style="left:-1px;top:-1px"><path d="M8 3.500 V17.500 H22.500 V6.500 H8" fill="none" stroke="#9c9496" stroke-width=".9"/><path d="M10.200 15.500 l3 -4 l2 2 l2.500 -3.500 l3 5.500 z" fill="#9c9496"/><circle cx="12.500" cy="10.500" r="1.600" fill="none" stroke="#9c9496" stroke-width=".8"/></svg></div>
<div class="a pnl2" style="left:629px;top:853px;width:178px;height:36px;"></div>
<svg width="22" height="22" viewBox="0 0 22 22" style="left:635px;top:862px;"><circle cx="11" cy="11" r="8.600" fill="none" stroke="#b9d0e6" stroke-width="1.700" stroke-dasharray="31 2.500 1.500 2.500 1.500 2.500 1.500 2.500 1.500 2.500 1.500 3" transform="rotate(-42 11 11)"/><path d="M11 6 V11.500 L14.800 14" fill="none" stroke="#b9d0e6" stroke-width="1.600"/><path d="M15.500 2.500 l3 -.5 l-.3 3.200 z" fill="#b9d0e6"/></svg>
<div class="a" style="left:669px;top:864px;font-size:11.800px;line-height:14px;color:#fff;-webkit-text-stroke:.2px #fff"><span class="u" style="transform:scaleX(.94)">x1.0</span></div>
<div class="a " style="left:699px;top:865px;width:19px;height:18px;background:linear-gradient(#8893a1,#616e7c);border-radius:2px 0 0 2px;box-shadow:inset 0 0 0 .5px rgba(60,70,85,.5);color:#fff;font-size:11px;line-height:19px;text-align:center;font-weight:bold">-</div>
<div class="a " style="left:778px;top:865px;width:19px;height:18px;background:linear-gradient(#8893a1,#616e7c);border-radius:0 2px 2px 0;box-shadow:inset 0 0 0 .5px rgba(60,70,85,.5);color:#fff;font-size:11px;line-height:19px;text-align:center;font-weight:bold">+</div>
<div class="a " style="left:718px;top:872px;width:60px;height:2px;background:#f4f7fa;box-shadow:0 0 0 .3px #c8d0d8"></div>
<svg width="13" height="17" viewBox="0 0 13 17" style="left:733px;top:865px;"><path d="M2.200 1.300 H10.800 Q12 1.300 12 2.500 V10.500 L6.500 15.800 L1 10.500 V2.500 Q1 1.300 2.200 1.300 z" fill="#f1f1f1" stroke="#fff" stroke-width=".8"/><path d="M3.200 4.500 l.8 -1.200 M9.800 4.500 l-.8 -1.200" stroke="#c9c9c9" stroke-width=".8"/></svg>
<svg width="304" height="52" viewBox="0 0 304 52" style="left:808px;top:852px;"><defs><linearGradient id="tpg" x1="0" y1="0" x2="0" y2="1"><stop offset="0" stop-color="#3d4d5c"/><stop offset=".56" stop-color="#34434f"/><stop offset=".57" stop-color="#202b36"/><stop offset="1" stop-color="#27343f"/></linearGradient></defs>
<path d="M3.800 .5 H300.200 L286 51 H18 z" fill="#8fa4b6" opacity=".85"/>
<path d="M5.300 .5 H298.700 L284.800 49.900 H19.200 z" fill="#18212a"/>
<path d="M5.300 .5 H298.700 L297 6.500 H7 z" fill="#141a21"/>
<path d="M8.600 6.500 H295.400 L283.200 48.200 H20.800 z" fill="url(#tpg)"/>
<path d="M47.500 6.500 V48.500 M97 6.500 V48.500 M147 6.500 V48.500 M207 6.500 V48.500 M256.500 6.500 V48.500" stroke="#52626f" stroke-width="1" opacity=".75"/>
<path d="M60.300 14.500 V39.500" stroke="#dfeaf4" stroke-width="1.200"/>
<path d="M62 19.300 H84 V38.800 H62 z" fill="#b9d0e6"/><path d="M65 23.500 L75 28.800 L65 34 z" fill="#243039"/>
<path d="M114.200 20.500 H129.200 V34.700 H114.200 z" fill="#b9d0e6"/>
<path d="M166.700 17.200 L186.700 27.200 L166.700 37.200 z" fill="#b9d0e6"/>
<path d="M220 24.700 L229.500 29.200 L220 33.800 z" fill="#b9d0e6"/><path d="M232.500 14.500 V39.500" stroke="#dfeaf4" stroke-width="1.200"/><path d="M234 18.800 H244 V38.800 H234 z" fill="#b9d0e6"/>
</svg>
<div class="a pnl2" style="left:1113px;top:853px;width:148px;height:36px;"></div>
<svg width="22" height="22" viewBox="0 0 22 22" style="left:1119px;top:861px;"><circle cx="11" cy="11.700" r="8.900" fill="none" stroke="#b9d0e6" stroke-width="1.900"/><path d="M11 6.500 V12 L15.200 14.600" fill="none" stroke="#b9d0e6" stroke-width="1.900"/><path d="M1.800 4.200 L7 4.600 L3.400 8.800 z" fill="#b9d0e6"/><circle cx="17.300" cy="4.900" r="1.700" fill="#b9d0e6"/></svg>
<div class="a spin lt" style="left:1148px;top:860px;width:45.5px;height:21.5px"><b style="width:16.5px"></b><u style="">5.00</u><s style="left:34.75px;top:4.575px"></s><s class="dn" style="left:34.75px;top:15.225px"></s></div>
<div class="a" style="left:1198px;top:865.800px;font-size:12px;line-height:14px;color:#e6eef6;font-weight:bold">x</div>
<div class="a spin lt" style="left:1208.5px;top:860px;width:40px;height:21.5px"><b style="width:16.5px"></b><u style="">3</u><s style="left:29.25px;top:4.575px"></s><s class="dn" style="left:29.25px;top:15.225px"></s></div>
<div class="a tb on" style="left:1268px;width:99.5px"><i></i><span class="lbl" style="left:7px"><span class="u">SNAP</span></span></div>
<div class="a spin lt sm" style="left:1317px;top:858px;width:45.5px;height:16px"><b style="width:16px"></b><u style="">0.10</u><s style="left:35.0px;top:3.2px"></s><s class="dn" style="left:35.0px;top:11.1px"></s></div>
<div class="a tb on" style="left:1368.5px;width:28.5px"><i></i><svg width="29" height="24" viewBox="0 0 29 24" style="left:0;top:0"><path d="M5.800 3.500 H12 V17.500 H5.800 z" fill="#3b4d60"/><path d="M7.600 8 l2 2.500 l-2 2.500" fill="none" stroke="#9fb4c6" stroke-width="1"/><path d="M5 3.300 H12.800 M5 17.700 H12.800" stroke="#3b4d60" stroke-width=".9"/><path d="M13.800 6 h2.400 M13.800 8.200 h2.400 M13.800 10.400 h2.400 M13.800 12.600 h2.400 M13.800 14.800 h2.400" stroke="#3b4d60" stroke-width=".8"/><path d="M21.500 3.300 H19.300 Q17.800 3.300 17.800 4.800 V16.200 Q17.800 17.700 19.300 17.700 H21.500" fill="none" stroke="#3b4d60" stroke-width="1"/></svg></div>
<div class="a tb on" style="left:1398.5px;width:29.0px"><i></i><svg width="29" height="24" viewBox="0 0 29 24" style="left:0;top:0"><path d="M6 3.300 H8.200 Q9.700 3.300 9.700 4.800 V16.200 Q9.700 17.700 8.200 17.700 H6" fill="none" stroke="#3b4d60" stroke-width="1"/><path d="M11.500 6 h3 M11.500 8.200 h3 M11.500 10.400 h3 M11.500 12.600 h3 M11.500 14.800 h3" stroke="#3b4d60" stroke-width=".8"/><path d="M20.500 3.300 H18.300 Q16.800 3.300 16.800 4.800 V16.200 Q16.800 17.700 18.300 17.700 H20.500" fill="none" stroke="#3b4d60" stroke-width="1"/></svg></div>
<div class="a tb" style="left:1429px;width:28.5px"><i></i><svg width="29" height="24" viewBox="0 0 29 24" style="left:0;top:0"><path d="M7 3.500 V17.800" stroke="#3b4d60" stroke-width="1"/><path d="M8.800 6 h2.400 M8.800 8.200 h2.400 M8.800 10.400 h2.400 M8.800 12.600 h2.400 M8.800 14.800 h2.400" stroke="#3b4d60" stroke-width=".8"/><path d="M21 3.300 H15 Q13 3.300 13 5.300 V15.700 Q13 17.700 15 17.700 H21" fill="none" stroke="#3b4d60" stroke-width="1"/></svg></div>
<div class="a tb" style="left:1459px;width:28px"><i></i><svg width="29" height="24" viewBox="0 0 29 24" style="left:0;top:0"><path d="M7.300 4.300 H13 V17 H7.300 z M15 4.300 H20.700 V17 H15 z" fill="#3b4d60"/><path d="M9 8 l2 2.600 l-2 2.600 M19 8 l-2 2.600 l2 2.600" fill="none" stroke="#9fb4c6" stroke-width="1"/><path d="M6.500 3.300 H21.500 M6.500 18 H21.500" stroke="#3b4d60" stroke-width=".9"/></svg></div>
<div class="a tb" style="left:1492.5px;width:159.0px"><i></i><span class="lbl" style="left:7.500px"><span class="u">STEP</span></span></div>
<div class="a spin lt sm" style="left:1540px;top:858px;width:45px;height:16px"><b style="width:16px"></b><u style="">1</u><s style="left:34.5px;top:3.2px"></s><s class="dn" style="left:34.5px;top:11.1px"></s></div>
<div class="a " style="left:1587px;top:858px;width:58px;height:16px;background:rgba(255,255,255,.16);border-radius:2px;color:#3b4d60;font-size:10.500px;line-height:16px;padding-left:2px"><span class="u" style="transform:scaleX(.89)">Frames</span></div>
<div class="a " style="left:1629px;top:858px;width:16px;height:16px;background:#aeb9c5;border:1px solid;border-color:#fff #000 #000 #fff;box-shadow:inset -1px -1px 0 #6d7885"></div>
<svg width="16" height="16" viewBox="0 0 16 16" style="left:1629px;top:858px;"><path d="M4.800 6.200 H11.200 L8 9.700 z" fill="#fff"/><path d="M4.800 6.200 H11.200" stroke="#b9a9a9" stroke-width=".8"/></svg>
<div class="a pnl" style="left:388px;top:892px;width:124.5px;height:39.5px;"></div>
<svg width="22" height="22" viewBox="0 0 22 22" style="left:397.5px;top:902px;"><path d="M.8 5 Q2.800 5 2.800 7 V19 Q2.800 21 .8 21 z" fill="#b9d0e6"/><path d="M5 1 V21" stroke="#b9d0e6" stroke-width="1.100"/><circle cx="10.300" cy="12.300" r="3.800" fill="#b9d0e6"/><path d="M7.800 12.300 h5 M10.300 9.800 v5" stroke="#5d6d7d" stroke-width="1.300"/><path d="M20.800 5 H17.300 Q15.500 5 15.500 6.800 V19.200 Q15.500 21 17.300 21 H20.800 z" fill="#b9d0e6"/></svg>
<div class="a spin md" style="left:427px;top:898px;width:46px;height:26px"><b style="width:17.5px"></b><u style="">2.00</u><s style="left:34.75px;top:5.7px"></s><s class="dn" style="left:34.75px;top:18.6px"></s></div>
<svg width="22" height="22" viewBox="0 0 22 22" style="left:481.5px;top:902px;"><path d="M.8 5 Q2.800 5 2.800 7 V19 Q2.800 21 .8 21 z" fill="#b9d0e6"/><path d="M5 1 V21" stroke="#b9d0e6" stroke-width="1.100"/><circle cx="10.300" cy="12.300" r="3.800" fill="#b9d0e6"/><path d="M7.800 12.300 h5" stroke="#5d6d7d" stroke-width="1.400"/><path d="M20.800 5 H17.300 Q15.500 5 15.500 6.800 V19.200 Q15.500 21 17.300 21 H20.800 z" fill="#b9d0e6"/></svg>
<div class="a pnl" style="left:520px;top:892px;width:275px;height:39.5px;"></div>
<svg width="22" height="22" viewBox="0 0 22 22" style="left:532px;top:902px;"><path d="M2.500 5.500 H18 Q20.500 5.500 20.500 8 V19 Q20.500 21.500 18 21.500 H3.500 Q1 21.500 1 19 V7 Q1 5.500 2.500 5.500 z" fill="#b9d0e6"/><circle cx="7.800" cy="5.500" r="4.200" fill="#b9d0e6" stroke="#5d6d7d" stroke-width=".9"/><path d="M5.300 5.500 h5 M7.800 3 v5" stroke="#6b7b8b" stroke-width="1.200"/></svg>
<div class="a" style="left:557px;top:907px;font-size:11.500px;line-height:14px;color:#fff"><span class="u" style="transform:scaleX(.9)">ADD</span></div>
<div class="a spin md dim" style="left:584px;top:899px;width:45.5px;height:25.5px"><b style="width:17px"></b><u style="">5.00</u><s style="left:34.5px;top:5.575px"></s><s class="dn" style="left:34.5px;top:18.225px"></s></div>
<div class="a pnl" style="left:633px;top:900.5px;width:50px;height:31.0px;"></div>
<svg width="38" height="18" viewBox="0 0 38 18" style="left:639px;top:906px;"><path d="M1 2 H3.200 Q4.700 2 4.700 3.500 V14.500 Q4.700 16 3.200 16 H1" fill="none" stroke="#b9d0e6" stroke-width="1"/><path d="M6.500 2.500 H13.500 V15.800 H6.500 z" fill="#b9d0e6"/><path d="M15 .8 V16.500" stroke="#b9d0e6" stroke-width="1"/><path d="M7.800 9 h4.500 M8.800 6.800 l2.500 4.400 M11.300 6.800 l-2.500 4.400" stroke="#435668" stroke-width=".9"/><path d="M22 2.500 H29 V15.800 H22 z M30.800 2.500 H36.800 V15.800 H30.800 z" fill="#b9d0e6"/><path d="M23.300 9 h4.500 M24.300 6.800 l2.500 4.400 M26.800 6.800 l-2.500 4.400" stroke="#435668" stroke-width=".9"/><path d="M32.300 6.500 L35.800 9 L32.300 11.500 z" fill="#435668"/></svg>
<svg width="22" height="22" viewBox="0 0 22 22" style="left:708px;top:902px;"><path d="M2.500 5.500 H18 Q20.500 5.500 20.500 8 V19 Q20.500 21.500 18 21.500 H3.500 Q1 21.500 1 19 V7 Q1 5.500 2.500 5.500 z" fill="#b9d0e6"/><circle cx="7.300" cy="5.300" r="4.200" fill="#b9d0e6" stroke="#5d6d7d" stroke-width=".9"/><path d="M4.800 5.300 h5" stroke="#6b7b8b" stroke-width="1.300"/></svg>
<div class="a" style="left:733px;top:907px;font-size:11.500px;line-height:14px;color:#fff"><span class="u" style="transform:scaleX(.9)">REMOVE</span></div>
<div class="a db" style="left:802px;width:48px"><svg width="48" height="23" viewBox="0 0 48 23" style="left:0;top:0"><path d="M6.5 9.1 l-2.0 3.2 l2.0 3.2 M9.0 9.1 l-2.0 3.2 l2.0 3.2 " fill="none" stroke="#3d5064" stroke-width="0.9"/><rect x="11.500" y="6.500" width="7.500" height="11.500" rx="1" fill="#3d5064"/><path d="M26.5 9.1 l2.0 3.2 l-2.0 3.2 M29.0 9.1 l2.0 3.2 l-2.0 3.2 " fill="none" stroke="#3d5064" stroke-width="0.9"/><rect x="33.500" y="6.500" width="7.500" height="11.500" rx="1" fill="#3d5064"/></svg></div>
<div class="a db" style="left:854px;width:23.5px"><svg width="24" height="23" viewBox="0 0 24 23" style="left:0;top:0"><rect x="4.200" y="6.800" width="15" height="11" rx="2" fill="#3d5064"/><path d="M10.8 9.1 l-2.0 3.2 l2.0 3.2 M13.3 9.1 l-2.0 3.2 l2.0 3.2 " fill="none" stroke="#6f8496" stroke-width="0.9"/></svg></div>
<div class="a db" style="left:881px;width:31px"><svg width="24" height="23" viewBox="0 0 24 23" style="left:0;top:0"><path d="M6.8 9.1 l-2.0 3.2 l2.0 3.2 " fill="none" stroke="#3d5064" stroke-width="0.9"/><path d="M9.200 4.500 V19" stroke="#3d5064" stroke-width="1"/></svg></div>
<div class="a db" style="left:1008px;width:31.5px"><svg width="32" height="23" viewBox="0 0 32 23" style="left:0;top:0"><path d="M21.500 4.500 V19" stroke="#3d5064" stroke-width="1"/><path d="M23.8 9.1 l2.0 3.2 l-2.0 3.2 " fill="none" stroke="#3d5064" stroke-width="0.9"/></svg></div>
<div class="a db" style="left:1043px;width:23.5px"><svg width="24" height="23" viewBox="0 0 24 23" style="left:0;top:0"><rect x="4.200" y="6.800" width="15" height="11" rx="2" fill="#3d5064"/><path d="M10.3 9.1 l2.0 3.2 l-2.0 3.2 M12.8 9.1 l2.0 3.2 l-2.0 3.2 " fill="none" stroke="#6f8496" stroke-width="0.9"/></svg></div>
<div class="a db" style="left:1070px;width:48px"><svg width="48" height="23" viewBox="0 0 48 23" style="left:0;top:0"><rect x="4.500" y="6.500" width="7.500" height="11.500" rx="1" fill="#3d5064"/><path d="M16.5 9.1 l-2.0 3.2 l2.0 3.2 M19.0 9.1 l-2.0 3.2 l2.0 3.2 " fill="none" stroke="#3d5064" stroke-width="0.9"/><rect x="26.500" y="6.500" width="7.500" height="11.500" rx="1" fill="#3d5064"/><path d="M36.5 9.1 l2.0 3.2 l-2.0 3.2 M39.0 9.1 l2.0 3.2 l-2.0 3.2 " fill="none" stroke="#3d5064" stroke-width="0.9"/></svg></div>
<svg width="124" height="28" viewBox="0 0 124 28" style="left:898px;top:904.5px;"><path d="M3 28 L10.500 5.500 Q11 4 12.500 4 H111.500 Q113 4 113.500 5.500 L121 28 z" fill="#2a3642"/><path d="M4.800 28 L11.800 6.300 Q12.200 5.300 13.300 5.300 H110.700 Q111.800 5.300 112.200 6.300 L119.200 28 z" fill="#161d24"/><path d="M7 28 L13.500 7.500 H110.500 L117 28 z" fill="#0c1014"/></svg>
<div class="a" style="left:918.500px;top:914.500px;font-family:'Liberation Mono','DejaVu Sans Mono',monospace;font-size:12.300px;letter-spacing:-.48px;line-height:14px;color:#363d46">23:59:59.999</div>
<div class="a pnl" style="left:1125px;top:892px;width:118px;height:39.5px;"></div>
<svg width="22" height="22" viewBox="0 0 22 22" style="left:1135.5px;top:901.8px;"><rect x=".5" y="5" width="20.500" height="16" rx="2.500" fill="#b9d0e6"/><path d="M4.800 8 V18" stroke="#435668" stroke-width="1"/><path d="M9.0 10.2 l-1.7 2.8 l1.7 2.8 " fill="none" stroke="#435668" stroke-width="1"/></svg>
<svg width="22" height="22" viewBox="0 0 22 22" style="left:1173.5px;top:901.8px;"><path d="M.5 5 H6.500 V21 H.5 z M9.500 5 H21 V21 H9.500 z" fill="#b9d0e6"/><path d="M8 .8 V21" stroke="#b9d0e6" stroke-width="1"/></svg>
<svg width="22" height="22" viewBox="0 0 22 22" style="left:1210.5px;top:901.8px;"><rect x=".5" y="5" width="20.500" height="16" rx="2.500" fill="#b9d0e6"/><path d="M16.700 8 V18" stroke="#435668" stroke-width="1"/><path d="M12.5 10.2 l1.7 2.8 l-1.7 2.8 " fill="none" stroke="#435668" stroke-width="1"/></svg>
<div class="a pnl" style="left:1250px;top:892px;width:198px;height:39.5px;"></div>
<svg width="24" height="22" viewBox="0 0 24 22" style="left:1258px;top:901.8px;"><path d="M3.300 .8 V21" stroke="#b9d0e6" stroke-width="1"/><path d="M12 5 H23.200 V21 H12 Q10 21 10 19 V7 Q10 5 12 5 z" fill="#b9d0e6"/><path d="M8.2 10.2 l-1.7 2.8 l1.7 2.8 " fill="none" stroke="#b9d0e6" stroke-width="1"/></svg>
<div class="a pnl in" style="left:1290px;top:897.5px;width:18.5px;height:34.0px;"></div>
<svg width="24" height="22" viewBox="0 0 24 22" style="left:1318px;top:901.8px;"><path d="M3 5 H7.200 V21 H3 Q1 21 1 19 V7 Q1 5 3 5 z M9.500 5 H21.200 V21 H9.500 z" fill="#b9d0e6"/><path d="M8.300 .8 V21" stroke="#b9d0e6" stroke-width="1"/><path d="M3.3 10.2 l1.7 2.8 l-1.7 2.8 " fill="none" stroke="#435668" stroke-width="1"/></svg>
<svg width="24" height="22" viewBox="0 0 24 22" style="left:1358px;top:901.8px;"><path d="M1 5 H12 V21 H1 z M14.500 5 H18.800 Q20.800 5 20.800 7 V19 Q20.800 21 18.800 21 H14.500 z" fill="#b9d0e6"/><path d="M13.300 .8 V21" stroke="#b9d0e6" stroke-width="1"/><path d="M18.5 10.2 l-1.7 2.8 l1.7 2.8 " fill="none" stroke="#435668" stroke-width="1"/></svg>
<div class="a pnl in" style="left:1390px;top:897.5px;width:18.5px;height:34.0px;"></div>
<svg width="24" height="22" viewBox="0 0 24 22" style="left:1415px;top:901.8px;"><path d="M1 5 H11.800 Q13.800 5 13.800 7 V19 Q13.800 21 11.800 21 H1 z" fill="#b9d0e6"/><path d="M15.8 10.2 l1.7 2.8 l-1.7 2.8 " fill="none" stroke="#b9d0e6" stroke-width="1"/><path d="M20.800 .8 V21" stroke="#b9d0e6" stroke-width="1"/></svg>
<div class="a pnl" style="left:1455px;top:892px;width:78.5px;height:39.5px;"></div>
<svg width="22" height="22" viewBox="0 0 22 22" style="left:1465.5px;top:902.5px;"><circle cx="12.800" cy="8.800" r="6.700" fill="none" stroke="#b9d0e6" stroke-width="2"/><path d="M9.500 8.800 h6.500" stroke="#b9d0e6" stroke-width="1.700"/><path d="M7.800 14 L2 19.800" stroke="#b9d0e6" stroke-width="3" stroke-linecap="round"/></svg>
<svg width="22" height="22" viewBox="0 0 22 22" style="left:1500.5px;top:902.5px;"><circle cx="12.800" cy="8.800" r="6.700" fill="none" stroke="#b9d0e6" stroke-width="2"/><path d="M9.500 8.800 h6.500 M12.800 5.500 v6.500" stroke="#b9d0e6" stroke-width="1.700"/><path d="M7.800 14 L2 19.800" stroke="#b9d0e6" stroke-width="3" stroke-linecap="round"/></svg>
<svg width="32" height="26" viewBox="0 0 32 26" style="left:1888px;top:906px;"><path d="M4 26 L11.500 4 Q12 2.500 13.500 2.500 H32 V26 z" fill="#55697b"/><path d="M5.800 26 L12.800 4.300 H32 V26 z" fill="#323e49"/><path d="M16.500 12.500 H28 M16.500 15.800 H28 M16.500 19 H28" stroke="#5d6f7f" stroke-width="1"/></svg>
<div id="tlhead" class="a"></div><div id="tlscrollbg" class="a"></div>
<div id="tlline" class="a"></div><div id="tlblock" class="a"></div><div id="tlscroll" class="a"></div>
<div class="a tl" style="left:5px">00</div><div class="a tl" style="left:104px">01</div><div class="a tl" style="left:204px">02</div><div class="a tl" style="left:304px">03</div><div class="a tl" style="left:404px">04</div><div class="a tl" style="left:504px">05</div><div class="a tl" style="left:604px">06</div><div class="a tl" style="left:704px">07</div><div class="a tl" style="left:804px">08</div><div class="a tl" style="left:904px">09</div><div class="a tl" style="left:1004px">10</div><div class="a tl" style="left:1104px">11</div><div class="a tl" style="left:1204px">12</div><div class="a tl" style="left:1304px">13</div><div class="a tl" style="left:1404px">14</div><div class="a tl" style="left:1504px">15</div><div class="a tl" style="left:1604px">16</div><div class="a tl" style="left:1704px">17</div><div class="a tl" style="left:1804px">18</div><div class="a tl" style="left:1904px">19</div>
<div id="play" class="a"></div>
<div id="redbox" class="a"></div><!--/TB-->
</body>
</html>
